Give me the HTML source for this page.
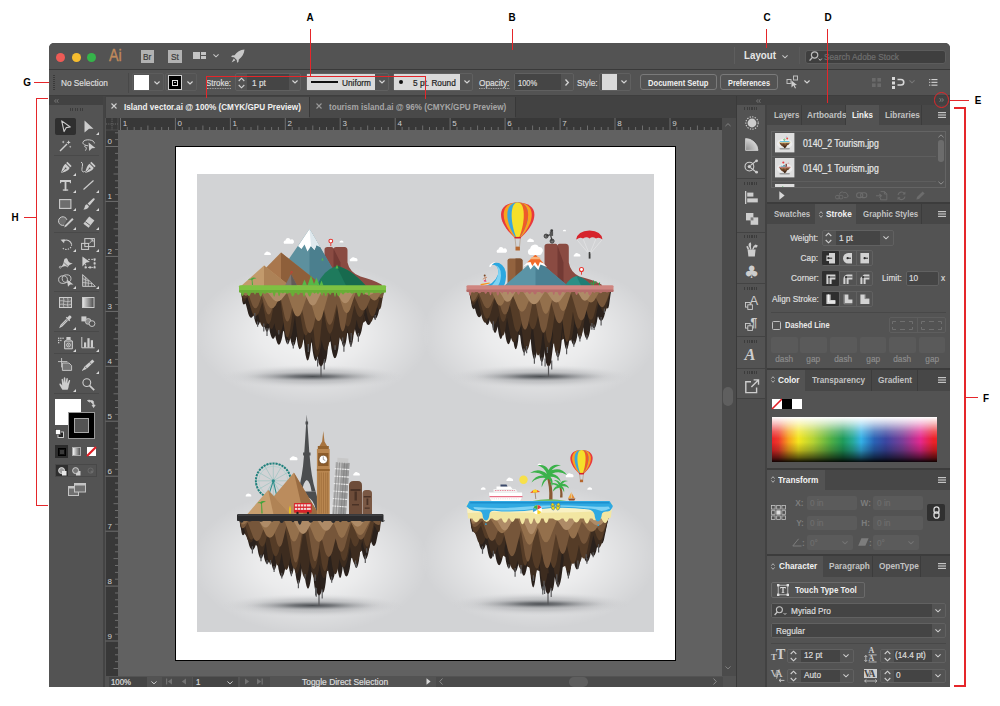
<!DOCTYPE html>
<html><head><meta charset="utf-8"><title>Illustrator workspace</title>
<style>
*{box-sizing:border-box;margin:0;padding:0}
html,body{width:1000px;height:706px;background:#fff;overflow:hidden}
body{position:relative;font-family:"Liberation Sans",sans-serif;font-size:9.5px;color:#dcdcdc;-webkit-font-smoothing:antialiased}
.a{position:absolute}
.t{position:absolute;white-space:nowrap;line-height:12px;-webkit-text-stroke:.22px;transform:scaleX(.87);transform-origin:0 50%}
.t.r{transform-origin:100% 50%}
.t.c{transform-origin:50% 50%}
.b{font-weight:bold}
.lbl{position:absolute;font-weight:bold;color:#000;font-size:11.5px;line-height:12px;transform:scaleX(.86);transform-origin:50% 50%;width:12px;text-align:center}
.b{-webkit-text-stroke:0}
.red{position:absolute;background:#e5262a}
#win{position:absolute;left:49px;top:43px;width:901px;height:643.7px;background:#535353;border-radius:5px 5px 0 0;overflow:hidden}
svg{position:absolute;overflow:visible}
.chev{position:absolute;width:6px;height:3.5px}
.fld{position:absolute;background:#454545;border:1px solid #5e5e5e;border-radius:2px}
</style></head><body>
<!-- annotation callouts -->
<div class="lbl" style="left:303.5px;top:11px">A</div>
<div class="lbl" style="left:505.5px;top:11px">B</div>
<div class="lbl" style="left:760.5px;top:11px">C</div>
<div class="lbl" style="left:821.5px;top:11px">D</div>
<div class="lbl" style="left:972px;top:94px">E</div>
<div class="lbl" style="left:980px;top:392px">F</div>
<div class="lbl" style="left:20.5px;top:76px">G</div>
<div class="lbl" style="left:8.5px;top:211px">H</div>
<div class="red" style="left:949px;top:99.5px;width:20px;height:1px"></div>
<div class="red" style="left:954px;top:107.2px;width:11.6px;height:1.4px"></div>
<div class="red" style="left:964.2px;top:107.2px;width:1.4px;height:579.6px"></div>
<div class="red" style="left:954px;top:685.4px;width:11.6px;height:1.4px"></div>
<div class="red" style="left:965px;top:397px;width:13px;height:1px"></div>
<div class="red" style="left:33.6px;top:81.5px;width:21px;height:1px"></div>
<div class="red" style="left:36px;top:97.8px;width:12px;height:1.4px"></div>
<div class="red" style="left:36px;top:97.8px;width:1.4px;height:408.4px"></div>
<div class="red" style="left:36px;top:504.8px;width:12px;height:1.4px"></div>
<div class="red" style="left:24px;top:217px;width:13px;height:1px"></div>
<div id="win"></div>
<!-- title bar -->
<div class="a" style="left:49px;top:43px;width:901px;height:26px;background:#535353;border-radius:5px 5px 0 0"></div>
<div class="a" style="left:49px;top:69px;width:901px;height:1px;background:#3a3a3a"></div>
<div class="a" style="left:56px;top:52.5px;width:9px;height:9px;border-radius:50%;background:#ee5b56"></div>
<div class="a" style="left:71.5px;top:52.5px;width:9px;height:9px;border-radius:50%;background:#f6bd2f"></div>
<div class="a" style="left:87px;top:52.5px;width:9px;height:9px;border-radius:50%;background:#35b44a"></div>
<div class="t" style="left:109px;top:45px;font-size:16.5px;line-height:20px;color:#c08a5c;letter-spacing:-.2px;-webkit-text-stroke:.35px #c08a5c">Ai</div>
<div class="a" style="left:140.5px;top:50px;width:13.5px;height:13px;background:#b2b2b2"></div>
<div class="t" style="left:142.5px;top:51.5px;font-size:9.5px;line-height:10px;color:#3a3a3a">Br</div>
<div class="a" style="left:168px;top:50px;width:13.5px;height:13px;background:#b2b2b2"></div>
<div class="t" style="left:170.5px;top:51.5px;font-size:9.5px;line-height:10px;color:#3a3a3a">St</div>
<svg style="left:193px;top:51.5px" width="13" height="7" viewBox="0 0 13 7"><rect x="0" y="0" width="7" height="7" fill="#c4c4c4"/><rect x="8" y="0" width="5" height="3" fill="#c4c4c4"/><rect x="8" y="4" width="5" height="3" fill="#c4c4c4"/></svg>
<svg class="chev" style="left:212.5px;top:54px" viewBox="0 0 7 4"><path d="M.5 .5 L3.5 3.3 L6.5 .5" fill="none" stroke="#c8c8c8" stroke-width="1.2"/></svg>
<svg style="left:231px;top:49px" width="14" height="14" viewBox="0 0 14 14"><path d="M13.5 .5 C9 .8 6 3 3.6 6.2 L1 6.6 L.2 8 L3 8.2 L5.8 11 L6 13.8 L7.4 13 L7.8 10.4 C11 8 13.2 5 13.5 .5 Z" fill="#c8c8c8"/><path d="M2.8 9.6 L.6 13.4 L4.4 11.2 Z" fill="#c8c8c8"/></svg>
<div class="a" style="left:734px;top:47px;width:1px;height:17px;background:#5e5e5e"></div>
<div class="t b" style="left:743.6px;top:49.4px;font-size:10.5px;color:#e6e6e6;transform:scaleX(.93)">Layout</div>
<svg class="chev" style="left:782px;top:54.5px" viewBox="0 0 7 4"><path d="M.5 .5 L3.5 3.3 L6.5 .5" fill="none" stroke="#c8c8c8" stroke-width="1.2"/></svg>
<div class="a" style="left:799px;top:47px;width:1px;height:17px;background:#5a5a5a"></div>
<div class="a" style="left:804.7px;top:50px;width:141.8px;height:14px;background:#3f3f3f;border:1px solid #5c5c5c;border-radius:3px"></div>
<svg style="left:809px;top:51px" width="14" height="11" viewBox="0 0 14 11"><circle cx="5.6" cy="4" r="3.2" fill="none" stroke="#bdbdbd" stroke-width="1.2"/><path d="M3.4 6.4 L.6 9.6" stroke="#bdbdbd" stroke-width="1.4"/><path d="M9.6 7.6 L11.2 9.4 L12.8 7.6" fill="none" stroke="#bdbdbd" stroke-width="1"/></svg>
<div class="t" style="left:824px;top:51px;font-size:9.5px;color:#6f6f6f">Search Adobe Stock</div>

<!-- control bar -->
<div class="a" style="left:49px;top:70px;width:901px;height:25px;background:#535353"></div>
<div class="a" style="left:52.5px;top:75px;width:2px;height:15px;background:repeating-linear-gradient(#3a3a3a 0 1px,transparent 1px 2px)"></div>
<div class="t" style="left:60.5px;top:76.7px;font-size:9.5px">No Selection</div>
<div class="a" style="left:128px;top:73px;width:1px;height:20px;background:#484848"></div>
<div class="a" style="left:131.5px;top:73px;width:32px;height:18px;border:1px solid #5c5c5c;border-radius:2px"></div><div class="a" style="left:134px;top:75.3px;width:15px;height:14.4px;background:#fff"></div>
<svg class="chev" style="left:153.5px;top:80.5px" viewBox="0 0 7 4"><path d="M.5 .5 L3.5 3.3 L6.5 .5" fill="none" stroke="#d4d4d4" stroke-width="1.35"/></svg>
<div class="a" style="left:165px;top:73px;width:32px;height:18px;border:1px solid #5c5c5c;border-radius:2px"></div><div class="a" style="left:167.5px;top:75.3px;width:14.8px;height:14.4px;background:#000;border:1px solid #cfcfcf"></div>
<div class="a" style="left:172px;top:79.5px;width:6px;height:6px;background:#000;border:1.3px solid #e6e6e6"></div><div class="a" style="left:174.3px;top:81.8px;width:1.4px;height:1.4px;background:#bbb"></div>
<svg class="chev" style="left:187px;top:80.5px" viewBox="0 0 7 4"><path d="M.5 .5 L3.5 3.3 L6.5 .5" fill="none" stroke="#d4d4d4" stroke-width="1.35"/></svg>
<div class="t" style="left:206.3px;top:76.7px;border-bottom:1px dotted #bbb;line-height:11px;height:12px;transform:scaleX(.83)">Stroke:</div>
<div class="a" style="left:235px;top:73px;width:66px;height:18px;border:1px solid #606060;border-radius:2px"></div>
<svg style="left:238px;top:76.7px" width="7" height="12" viewBox="0 0 7 12"><path d="M.7 4 L3.5 1.2 L6.3 4 M.7 8 L3.5 10.8 L6.3 8" fill="none" stroke="#d0d0d0" stroke-width="1.1"/></svg>
<div class="a" style="left:247px;top:74px;width:42px;height:16px;background:#454545"></div>
<div class="t" style="left:252px;top:76.7px">1 pt</div>
<svg class="chev" style="left:291.5px;top:80px" viewBox="0 0 7 4"><path d="M.5 .5 L3.5 3.3 L6.5 .5" fill="none" stroke="#d4d4d4" stroke-width="1.35"/></svg>
<div class="a" style="left:306px;top:73px;width:83px;height:18px;border:1px solid #606060;border-radius:2px"></div>
<div class="a" style="left:307px;top:74px;width:67.5px;height:16px;background:#dadada"></div>
<div class="a" style="left:311px;top:81px;width:27px;height:2px;background:#111"></div>
<div class="t" style="left:342.2px;top:76.7px;color:#222">Uniform</div>
<svg class="chev" style="left:379px;top:80px" viewBox="0 0 7 4"><path d="M.5 .5 L3.5 3.3 L6.5 .5" fill="none" stroke="#d4d4d4" stroke-width="1.35"/></svg>
<div class="a" style="left:393px;top:73px;width:80px;height:18px;border:1px solid #606060;border-radius:2px"></div>
<div class="a" style="left:394px;top:74px;width:65.5px;height:16px;background:#dadada"></div>
<div class="a" style="left:399px;top:80px;width:4px;height:4px;border-radius:50%;background:#111"></div>
<div class="t" style="left:412.5px;top:76.7px;color:#222">5 pt. Round</div>
<svg class="chev" style="left:463.5px;top:80px" viewBox="0 0 7 4"><path d="M.5 .5 L3.5 3.3 L6.5 .5" fill="none" stroke="#d4d4d4" stroke-width="1.35"/></svg>
<div class="t" style="left:479px;top:76.7px;border-bottom:1px dotted #bbb;line-height:11px;height:12px">Opacity:</div>
<div class="a" style="left:514px;top:73px;width:60px;height:18px;border:1px solid #606060;border-radius:2px"></div>
<div class="a" style="left:515px;top:74px;width:46px;height:16px;background:#454545"></div>
<div class="t" style="left:518px;top:76.7px;transform:scaleX(.79)">100%</div>
<svg style="left:565px;top:78.5px" width="4" height="7" viewBox="0 0 4 7"><path d="M.5 .5 L3.3 3.5 L.5 6.5" fill="none" stroke="#d4d4d4" stroke-width="1.35"/></svg>
<div class="t" style="left:577px;top:76.7px">Style:</div>
<div class="a" style="left:599px;top:73px;width:32px;height:18px;border:1px solid #606060;border-radius:2px"></div><div class="a" style="left:602px;top:74px;width:14.5px;height:16px;background:#dadada"></div>
<svg class="chev" style="left:620.8px;top:80px" viewBox="0 0 7 4"><path d="M.5 .5 L3.5 3.3 L6.5 .5" fill="none" stroke="#d4d4d4" stroke-width="1.35"/></svg>
<div class="a" style="left:640px;top:74px;width:77px;height:16px;border:1px solid #7a7a7a;border-radius:3px"></div>
<div class="t b" style="left:648px;top:76.7px;font-size:9px;color:#f0f0f0;transform:scaleX(.845)">Document Setup</div>
<div class="a" style="left:720px;top:74px;width:58px;height:16px;border:1px solid #7a7a7a;border-radius:3px"></div>
<div class="t b" style="left:727.6px;top:76.7px;font-size:9px;color:#f0f0f0;transform:scaleX(.815)">Preferences</div>
<svg style="left:786px;top:75px" width="14" height="14" viewBox="0 0 14 14"><rect x="1" y="4.5" width="4" height="4" fill="none" stroke="#bdbdbd" stroke-width="1"/><rect x="7.5" y="1" width="4" height="4" fill="none" stroke="#bdbdbd" stroke-width="1"/><path d="M5.5 5.5 L5.5 12.5 L7.5 10.6 L9 13.5 L10 13 L8.6 10.2 L11 10 Z" fill="#cfcfcf"/></svg>
<svg class="chev" style="left:803.5px;top:80px" viewBox="0 0 7 4"><path d="M.5 .5 L3.5 3.3 L6.5 .5" fill="none" stroke="#d4d4d4" stroke-width="1.35"/></svg>
<svg style="left:872px;top:77.5px" width="9" height="9" viewBox="0 0 10 10" fill="#6a6a6a"><rect x="0" y="0" width="4" height="4"/><rect x="6" y="0" width="4" height="4"/><rect x="0" y="6" width="4" height="4"/><rect x="6" y="6" width="4" height="4"/></svg>
<svg style="left:892px;top:76.7px" width="12" height="12" viewBox="0 0 12 12"><rect x="0" y="0" width="3" height="3" fill="#d8d8d8"/><rect x="0" y="4.5" width="3" height="3" fill="#d8d8d8"/><rect x="0" y="9" width="3" height="3" fill="#d8d8d8"/><path d="M5.5 2.5 H9 A2.3 2.3 0 0 1 9 8 H5.5" fill="none" stroke="#d8d8d8" stroke-width="1.6"/></svg>
<svg class="chev" style="left:909px;top:80px" viewBox="0 0 7 4"><path d="M.5 .5 L3.5 3.3 L6.5 .5" fill="none" stroke="#777" stroke-width="1.2"/></svg>
<svg style="left:928.5px;top:79px" width="8.6" height="6.8" viewBox="0 0 11 9" fill="#d0d0d0"><rect x="0" y="0" width="1.5" height="1.5"/><rect x="3" y="0" width="8" height="1.5"/><rect x="0" y="3.7" width="1.5" height="1.5"/><rect x="3" y="3.7" width="8" height="1.5"/><rect x="0" y="7.4" width="1.5" height="1.5"/><rect x="3" y="7.4" width="8" height="1.5"/></svg>
<div class="a" style="left:49px;top:95px;width:901px;height:1px;background:#3e3e3e"></div>
<!-- left toolbar -->
<div class="a" style="left:49px;top:96px;width:55px;height:591px;background:#535353"></div>
<div class="a" style="left:49px;top:96px;width:55px;height:9px;background:#424242"></div>
<div class="a" style="left:103px;top:96px;width:2px;height:591px;background:#444"></div>
<svg style="left:53.5px;top:98.6px" width="5" height="4" viewBox="0 0 6 5"><path d="M2.5 .3 L.6 2.5 L2.5 4.7 M5.3 .3 L3.4 2.5 L5.3 4.7" fill="none" stroke="#868686" stroke-width="1"/></svg>
<div class="a" style="left:69.5px;top:107.5px;width:14px;height:3px;background:repeating-linear-gradient(90deg,#3c3c3c 0 1px,transparent 1px 2.5px)"></div>
<div class="a" style="left:55px;top:118px;width:21px;height:17px;background:#2f2f2f;border-radius:2px"></div>
<div class="a" style="left:54px;top:155px;width:45px;height:1px;background:#494949"></div>
<div class="a" style="left:54px;top:232px;width:45px;height:1px;background:#494949"></div>
<div class="a" style="left:54px;top:291px;width:45px;height:1px;background:#494949"></div>
<div class="a" style="left:54px;top:331px;width:45px;height:1px;background:#494949"></div>
<div class="a" style="left:54px;top:353px;width:45px;height:1px;background:#494949"></div>
<div class="a" style="left:54px;top:393px;width:45px;height:1px;background:#494949"></div>
<!-- TOOLICONS -->
<svg style="left:61px;top:120px" width="10" height="13" viewBox="0 0 10 13"><path d="M.7 .9 L9.3 7 L5.3 7.6 L3.1 11.6 Z" fill="none" stroke="#cdcdcd" stroke-width="1.1" stroke-linejoin="round"/></svg>
<svg style="left:84px;top:120px" width="10" height="13" viewBox="0 0 10 13"><path d="M.5 .5 L9.5 8.8 L5 8.8 L.5 12.5 Z" fill="#cdcdcd"/></svg>
<svg style="left:95.5px;top:132px" width="3" height="3" viewBox="0 0 3 3"><path d="M3 0 V3 H0 Z" fill="#d8d8d8"/></svg>
<svg style="left:59px;top:139px" width="13" height="13" viewBox="0 0 13 13"><path d="M1 12 L8 5" stroke="#cdcdcd" stroke-width="1.5"/><path d="M9.6 1.2 l.6 1.6 l1.6 .6 l-1.6 .6 l-.6 1.6 l-.6 -1.6 l-1.6 -.6 l1.6 -.6 Z M4.2 1.6 l.4 1 l1 .4 l-1 .4 l-.4 1 l-.4 -1 l-1 -.4 l1 -.4 Z M11.2 6.6 l.35 .85 l.85 .35 l-.85 .35 l-.35 .85 l-.35 -.85 l-.85 -.35 l.85 -.35 Z" fill="#cdcdcd"/></svg>
<svg style="left:81.5px;top:139px" width="14" height="13" viewBox="0 0 14 13"><path d="M6.2 6.8 C2.6 6.4 .6 5 .9 3.4 C1.3 1.4 4.4 .5 7.6 .9 C10.8 1.3 12.6 2.8 12.3 4.4 M3.6 6.3 C2.4 6.6 2.4 8.2 3.6 8.2 C4.8 8.2 4.6 9.6 3.4 11.6" fill="none" stroke="#cdcdcd" stroke-width="1"/><path d="M6.6 3.6 L13.4 9 L10 9.2 L7.2 12 Z" fill="#cdcdcd"/></svg>
<svg style="left:59.5px;top:160.5px" width="12.5" height="13" viewBox="0 0 12.5 13"><path d="M7.4 .8 L11.6 5 L10.4 6.2 L6.2 2 Z" fill="#cdcdcd"/><path d="M5.6 2.8 L9.6 6.8 C9 9.4 6 10.6 1 12 C2.4 7 3.4 4 5.6 2.8 Z M1.4 11.6 L5.2 7.8" fill="#cdcdcd"/><circle cx="5.6" cy="7.4" r=".9" fill="#535353"/><path d="M1.6 11.4 L5.2 7.8" stroke="#535353" stroke-width=".6"/></svg>
<svg style="left:72.5px;top:172.5px" width="3" height="3" viewBox="0 0 3 3"><path d="M3 0 V3 H0 Z" fill="#d8d8d8"/></svg>
<svg style="left:83.5px;top:160.5px" width="12.5" height="13" viewBox="0 0 12.5 13"><path d="M7.4 .8 L11.6 5 L10.4 6.2 L6.2 2 Z" fill="#cdcdcd"/><path d="M5.6 2.8 L9.6 6.8 C9 9.4 6 10.6 1 12 C2.4 7 3.4 4 5.6 2.8 Z M1.4 11.6 L5.2 7.8" fill="#cdcdcd"/><circle cx="5.6" cy="7.4" r=".9" fill="#535353"/><path d="M1.6 11.4 L5.2 7.8" stroke="#535353" stroke-width=".6"/></svg>
<svg style="left:80px;top:161px" width="6" height="12" viewBox="0 0 6 12"><path d="M1 1.2 C4.6 2 .4 8.6 2.6 10.6 C3.4 11.2 4.4 10.8 5 10" fill="none" stroke="#cdcdcd" stroke-width="1"/></svg>
<svg style="left:60px;top:180px" width="11" height="11" viewBox="0 0 11 11"><rect x="0" y="0" width="11" height="2" fill="#cdcdcd"/><rect x="0" y="0" width="1.2" height="3.2" fill="#cdcdcd"/><rect x="9.8" y="0" width="1.2" height="3.2" fill="#cdcdcd"/><rect x="4.6" y="0" width="1.8" height="10.6" fill="#cdcdcd"/><rect x="2.8" y="9.4" width="5.4" height="1.3" fill="#cdcdcd"/></svg>
<svg style="left:72.5px;top:190px" width="3" height="3" viewBox="0 0 3 3"><path d="M3 0 V3 H0 Z" fill="#d8d8d8"/></svg>
<svg style="left:83px;top:180px" width="11" height="10" viewBox="0 0 11 10"><path d="M.5 9.5 L10.5 .5" stroke="#cdcdcd" stroke-width="1.2"/></svg>
<svg style="left:95.5px;top:190px" width="3" height="3" viewBox="0 0 3 3"><path d="M3 0 V3 H0 Z" fill="#d8d8d8"/></svg>
<svg style="left:59px;top:198.5px" width="12.5" height="10" viewBox="0 0 12.5 10"><rect x=".6" y=".6" width="11.3" height="8.8" fill="#6e6e6e" stroke="#cdcdcd" stroke-width="1.1"/></svg>
<svg style="left:72.5px;top:208px" width="3" height="3" viewBox="0 0 3 3"><path d="M3 0 V3 H0 Z" fill="#d8d8d8"/></svg>
<svg style="left:82.5px;top:197.5px" width="12" height="12" viewBox="0 0 12 12"><path d="M11.4 .4 C11.9 .9 11.8 1.5 11.3 2.1 L6.6 7.6 L4.6 5.6 L10 .6 C10.5 .1 11 0 11.4 .4 Z" fill="#cdcdcd"/><path d="M4 6.3 L5.9 8.2 C5.7 10.4 3.4 11.6 .4 11.4 C1.8 10.4 1.4 9.2 2 8 C2.4 7 3.2 6.4 4 6.3 Z" fill="#cdcdcd"/></svg>
<svg style="left:95.5px;top:208px" width="3" height="3" viewBox="0 0 3 3"><path d="M3 0 V3 H0 Z" fill="#d8d8d8"/></svg>
<svg style="left:57.5px;top:215.5px" width="16" height="13" viewBox="0 0 16 13"><path d="M8.9 3.8 A4.3 4.3 0 1 0 6 9.2" fill="#6e6e6e" stroke="#cdcdcd" stroke-width="1"/><path d="M14.2 2 L15.6 3.4 L8.4 10.6 L6.2 11.6 L7 9.2 Z" fill="#cdcdcd"/></svg>
<svg style="left:72.5px;top:227px" width="3" height="3" viewBox="0 0 3 3"><path d="M3 0 V3 H0 Z" fill="#d8d8d8"/></svg>
<svg style="left:82px;top:215.5px" width="13" height="12.5" viewBox="0 0 13 12.5"><path d="M7.2 .6 L12.4 4.6 L6.6 11.8 L1.4 7.8 Z" fill="#cdcdcd"/><path d="M3.2 5.6 L8.4 9.6" stroke="#535353" stroke-width=".9"/></svg>
<svg style="left:95.5px;top:227px" width="3" height="3" viewBox="0 0 3 3"><path d="M3 0 V3 H0 Z" fill="#d8d8d8"/></svg>
<svg style="left:59.5px;top:238px" width="13" height="12" viewBox="0 0 13 12"><path d="M3.4 3 A5.2 5.2 0 0 1 11.6 6.4" fill="none" stroke="#cdcdcd" stroke-width="1.1"/><path d="M11.6 6.4 A5.2 5.2 0 0 1 2.2 9.4" fill="none" stroke="#cdcdcd" stroke-width="1.1" stroke-dasharray="1.4 1.2"/><path d="M.6 1.8 L4.8 1.2 L4 5.2 Z" fill="#cdcdcd"/></svg>
<svg style="left:72.5px;top:249px" width="3" height="3" viewBox="0 0 3 3"><path d="M3 0 V3 H0 Z" fill="#d8d8d8"/></svg>
<svg style="left:81px;top:238px" width="14" height="12" viewBox="0 0 14 12"><rect x=".6" y="5.4" width="7" height="6" fill="none" stroke="#cdcdcd" stroke-width="1"/><rect x="3.8" y=".6" width="9.6" height="8" fill="none" stroke="#cdcdcd" stroke-width="1"/><path d="M8.4 5.2 L12 1.8 M9.6 1.8 H12 V4.2" fill="none" stroke="#cdcdcd" stroke-width=".9"/></svg>
<svg style="left:95.5px;top:249px" width="3" height="3" viewBox="0 0 3 3"><path d="M3 0 V3 H0 Z" fill="#d8d8d8"/></svg>
<svg style="left:58.5px;top:256.5px" width="15" height="11.5" viewBox="0 0 15 11.5"><path d="M1.2 10.2 C4 9 4.6 6 5 3.6 C5.4 1 8 .4 8.6 2.6 C9.2 5 10.6 6.2 13.8 6.6 C11 7.4 9.4 8.6 8.6 10.6 C7 8 4.6 9.6 1.2 10.2 Z" fill="#cdcdcd"/><circle cx="1.3" cy="10.2" r="1" fill="none" stroke="#cdcdcd" stroke-width=".7"/><path d="M5.2 5.8 L9 9.4 M4.2 4 L3 2.8 M10.2 10.4 L11.4 11.4" stroke="#535353" stroke-width=".7"/></svg>
<svg style="left:72.5px;top:267px" width="3" height="3" viewBox="0 0 3 3"><path d="M3 0 V3 H0 Z" fill="#d8d8d8"/></svg>
<svg style="left:81.5px;top:255.5px" width="14" height="12.5" viewBox="0 0 14 12.5"><path d="M.4 .6 L8 6 L4.4 6.4 L.4 10.4 Z" fill="#cdcdcd"/><path d="M6 3.4 H12.6 V11.4 H3.6 V8" fill="none" stroke="#cdcdcd" stroke-width=".9" stroke-dasharray="2 1.2"/><g fill="#cdcdcd"><rect x="11.6" y="2.4" width="2" height="2"/><rect x="11.6" y="10.4" width="2" height="2"/><rect x="2.6" y="10.4" width="2" height="2"/><rect x="7.2" y="10.4" width="2" height="2"/><rect x="11.6" y="6.4" width="2" height="2"/></g></svg>
<svg style="left:58px;top:273.5px" width="16" height="13" viewBox="0 0 16 13"><ellipse cx="5" cy="5.6" rx="4.4" ry="3.8" fill="none" stroke="#cdcdcd" stroke-width=".9"/><ellipse cx="8.6" cy="4.6" rx="4.4" ry="3.8" fill="none" stroke="#cdcdcd" stroke-width=".9"/><path d="M9 5.4 L15.4 10.4 L12.2 10.6 L10 12.8 Z" fill="#cdcdcd"/></svg>
<svg style="left:72.5px;top:285.5px" width="3" height="3" viewBox="0 0 3 3"><path d="M3 0 V3 H0 Z" fill="#d8d8d8"/></svg>
<svg style="left:81.5px;top:273.5px" width="14" height="13" viewBox="0 0 14 13"><path d="M.6 .6 V12.4 H13.4 Z" fill="none" stroke="#cdcdcd" stroke-width=".9"/><path d="M.6 4.6 L6.4 7 M.6 8.4 L10 9.6 M3.6 3.2 V12.4 M6.6 6 V12.4 M9.6 8.8 V12.4" stroke="#cdcdcd" stroke-width=".7"/><path d="M.6 .6 L6.4 5.8 V12.4 H.6 Z" fill="#cdcdcd" opacity=".25"/></svg>
<svg style="left:95.5px;top:285.5px" width="3" height="3" viewBox="0 0 3 3"><path d="M3 0 V3 H0 Z" fill="#d8d8d8"/></svg>
<svg style="left:59px;top:297px" width="13" height="11" viewBox="0 0 13 11"><rect x=".5" y=".5" width="12" height="10" fill="#6e6e6e" stroke="#cdcdcd" stroke-width="1"/><path d="M.5 4 C4 2.6 8 6.4 12.5 3.6 M.5 7.6 C4 6 8 9.4 12.5 7 M4.4 .5 C6 4 3 7 5 10.5 M8.6 .5 C10 4 7.4 7 9.2 10.5" fill="none" stroke="#cdcdcd" stroke-width=".7"/></svg>
<svg style="left:82px;top:297px" width="12.5" height="11" viewBox="0 0 12.5 11"><defs><linearGradient id="tg"><stop offset="0" stop-color="#e8e8e8"/><stop offset="1" stop-color="#4a4a4a"/></linearGradient></defs><rect x=".5" y=".5" width="11.5" height="10" fill="url(#tg)" stroke="#cdcdcd" stroke-width="1"/></svg>
<svg style="left:59px;top:314.5px" width="13" height="13" viewBox="0 0 13 13"><path d="M10.2 .6 C11.6 .2 12.8 1.4 12.4 2.8 L10.6 4.6 L11.2 5.2 L10.2 6.2 L6.8 2.8 L7.8 1.8 L8.4 2.4 Z" fill="#cdcdcd"/><path d="M7.6 4.4 L2 10 L1.2 12 L3 11 L8.6 5.4" fill="none" stroke="#cdcdcd" stroke-width="1.1"/></svg>
<svg style="left:72.5px;top:326.5px" width="3" height="3" viewBox="0 0 3 3"><path d="M3 0 V3 H0 Z" fill="#d8d8d8"/></svg>
<svg style="left:81px;top:316px" width="14.5" height="11" viewBox="0 0 14.5 11"><rect x=".4" y=".4" width="5" height="5" fill="#cdcdcd"/><circle cx="7.2" cy="5.4" r="2.9" fill="#8a8a8a" stroke="#cdcdcd" stroke-width=".8"/><circle cx="11" cy="7.6" r="2.9" fill="#535353" stroke="#cdcdcd" stroke-width=".9"/></svg>
<svg style="left:58px;top:337px" width="16" height="12.5" viewBox="0 0 16 12.5"><g fill="#cdcdcd"><rect x="0" y=".6" width="1.3" height="1.3"/><rect x="2.2" y=".6" width="1.3" height="1.3"/><rect x="4.4" y=".6" width="1.3" height="1.3"/><rect x="0" y="2.8" width="1.3" height="1.3"/><rect x="2.2" y="2.8" width="1.3" height="1.3"/><rect x="0" y="5" width="1.3" height="1.3"/><rect x="8.4" y="0" width="4.2" height="2.6"/></g><path d="M6.6 4 H14.4 V11.8 H6.6 Z" fill="#6e6e6e" stroke="#cdcdcd" stroke-width="1"/><path d="M7.6 4 L8.6 2.6 H12.4 L13.4 4" fill="none" stroke="#cdcdcd" stroke-width=".9"/><circle cx="10.5" cy="8" r="1.9" fill="none" stroke="#cdcdcd" stroke-width=".9"/><circle cx="10.5" cy="8" r=".7" fill="#cdcdcd"/></svg>
<svg style="left:72.5px;top:348.5px" width="3" height="3" viewBox="0 0 3 3"><path d="M3 0 V3 H0 Z" fill="#d8d8d8"/></svg>
<svg style="left:81px;top:337px" width="14" height="11.5" viewBox="0 0 14 11.5"><path d="M.8 0 V10.8 H13.6" fill="none" stroke="#cdcdcd" stroke-width="1"/><rect x="3" y="5.4" width="2.2" height="5.2" fill="#cdcdcd"/><rect x="6.4" y="1.2" width="2.2" height="9.4" fill="#cdcdcd"/><rect x="9.8" y="3.2" width="2.2" height="7.4" fill="#cdcdcd"/></svg>
<svg style="left:95.5px;top:348.5px" width="3" height="3" viewBox="0 0 3 3"><path d="M3 0 V3 H0 Z" fill="#d8d8d8"/></svg>
<svg style="left:57.5px;top:358px" width="14.5" height="13" viewBox="0 0 14.5 13"><path d="M0 3.6 H9.4 M3.6 0 V9.4" stroke="#cdcdcd" stroke-width=".9"/><path d="M4.4 5 H11 L13.6 7.6 V12.4 H4.4 Z" fill="#757575" stroke="#cdcdcd" stroke-width=".9"/></svg>
<svg style="left:81px;top:359px" width="14" height="12.5" viewBox="0 0 14 12.5"><path d="M11.4 .4 L13.4 2.4 L5.4 10 L.6 12 L3.6 7.4 Z" fill="#cdcdcd"/><path d="M4 7.8 L6 9.6" stroke="#535353" stroke-width=".7"/><path d="M8.4 3.2 L10.6 5.2" stroke="#535353" stroke-width=".7"/></svg>
<svg style="left:95.5px;top:371px" width="3" height="3" viewBox="0 0 3 3"><path d="M3 0 V3 H0 Z" fill="#d8d8d8"/></svg>
<svg style="left:58.5px;top:377px" width="13.5" height="13" viewBox="0 0 13.5 13"><path d="M3.4 12.8 C2.4 10.8 1 9.2 .4 7.4 C.2 6.6 1.2 6.2 1.8 6.8 L3.2 8.4 L2.6 2.4 C2.6 1.4 3.8 1.4 4 2.4 L4.6 6 L4.8 1 C4.8 0 6.2 0 6.3 1 L6.5 6 L7.4 1.6 C7.6 .6 8.9 .8 8.8 1.8 L8.4 6.4 L9.8 3.4 C10.2 2.6 11.4 3 11.1 4 L9.8 8.4 C9.6 10 9.4 11.4 8.6 12.8 Z" fill="#cdcdcd"/></svg>
<svg style="left:72.5px;top:389px" width="3" height="3" viewBox="0 0 3 3"><path d="M3 0 V3 H0 Z" fill="#d8d8d8"/></svg>
<svg style="left:81.5px;top:377.5px" width="13" height="13" viewBox="0 0 13 13"><circle cx="4.8" cy="4.6" r="3.9" fill="none" stroke="#cdcdcd" stroke-width="1.1"/><path d="M7.6 7.6 L12.2 12.2" stroke="#cdcdcd" stroke-width="1.7"/></svg>
<!-- fill / stroke -->
<div class="a" style="left:55px;top:398.5px;width:26px;height:26.5px;background:#fff"></div>
<div class="a" style="left:68px;top:412px;width:26.5px;height:26.5px;background:#000;border:1px solid #9a9a9a"></div>
<div class="a" style="left:74px;top:418px;width:14.5px;height:14.5px;background:#535353;border:1px solid #a8a8a8"></div>
<svg style="left:87px;top:399px" width="10" height="10" viewBox="0 0 10 10"><path d="M2.5 1 L2.5 3.2 L.4 1.6 Z M2 1.6 H5 Q6.6 1.6 6.6 3.4 V6 M5 6 L8.2 6 L6.6 8.6 Z" fill="#cfcfcf" stroke="#cfcfcf" stroke-width=".7"/></svg>
<svg style="left:55px;top:429px" width="9" height="9" viewBox="0 0 9 9"><rect x="3" y="3" width="5.5" height="5.5" fill="#222" stroke="#ddd" stroke-width=".9"/><rect x=".5" y=".5" width="5" height="5" fill="#fff" stroke="#333" stroke-width=".6"/></svg>
<div class="a" style="left:55px;top:445px;width:13px;height:13px;background:#2c2c2c"></div>
<div class="a" style="left:57.5px;top:447.5px;width:8px;height:8px;background:#111;border:1.5px solid #000"></div>
<div class="a" style="left:59.5px;top:449.5px;width:4px;height:4px;background:#3a3a3a"></div>
<div class="a" style="left:72px;top:447px;width:9px;height:9px;background:linear-gradient(90deg,#f4f4f4,#555);border:1px solid #aaa"></div>
<svg style="left:86.5px;top:447px" width="9" height="9" viewBox="0 0 9 9"><rect x="0" y="0" width="9" height="9" fill="#fff"/><path d="M0 9 L9 0" stroke="#e21d24" stroke-width="2.2"/></svg>
<div class="a" style="left:55px;top:464px;width:13px;height:13px;background:#2f2f2f"></div>
<div class="a" style="left:55px;top:464px;width:42px;height:13px;border:1px solid #484848"></div>
<svg style="left:57.5px;top:466.5px" width="9" height="9" viewBox="0 0 9 9"><circle cx="3.6" cy="3.6" r="3" fill="#999" stroke="#e8e8e8" stroke-width=".9"/><rect x="4" y="4" width="4.5" height="4.5" fill="#e8e8e8"/></svg>
<svg style="left:72px;top:466.5px" width="9" height="9" viewBox="0 0 9 9"><rect x="4" y="4" width="4.5" height="4.5" fill="#cfcfcf"/><circle cx="3.6" cy="3.6" r="3" fill="#777" stroke="#d8d8d8" stroke-width=".9"/></svg>
<svg style="left:87px;top:467px" width="8" height="8" viewBox="0 0 8 8"><circle cx="3.6" cy="3.6" r="2.6" fill="none" stroke="#6c6c6c" stroke-width=".9"/><rect x="3.6" y="3.6" width="2.5" height="2.5" fill="#6c6c6c"/></svg>
<svg style="left:68px;top:483px" width="18" height="13" viewBox="0 0 18 13"><rect x=".5" y="3.5" width="10" height="9" fill="#707070" stroke="#c4c4c4"/><rect x=".5" y="3.5" width="10" height="2" fill="#c4c4c4"/><rect x="6.5" y=".5" width="11" height="8.5" fill="#707070" stroke="#c4c4c4"/><rect x="6.5" y=".5" width="11" height="2" fill="#c4c4c4"/></svg>
<!-- document area -->
<div class="a" style="left:105px;top:96px;width:631px;height:22px;background:#424242"></div>
<div class="a" style="left:105.5px;top:96.5px;width:203px;height:21px;background:#535353"></div>
<div class="a" style="left:309px;top:96.5px;width:206px;height:21px;background:#494949"></div><div class="a" style="left:308.5px;top:97px;width:1px;height:20px;background:#383838"></div><div class="a" style="left:515px;top:97px;width:1px;height:20px;background:#383838"></div>
<svg style="left:111px;top:102.5px" width="6" height="6" viewBox="0 0 6 6"><path d="M.5 .5 L5.5 5.5 M5.5 .5 L.5 5.5" stroke="#d0d0d0" stroke-width="1.1"/></svg>
<div class="t b" style="left:124px;top:101px;font-size:9.5px;color:#f0f0f0;transform:scaleX(.858)">Island vector.ai @ 100% (CMYK/GPU Preview)</div>
<svg style="left:316px;top:102.5px" width="6" height="6" viewBox="0 0 6 6"><path d="M.5 .5 L5.5 5.5 M5.5 .5 L.5 5.5" stroke="#9a9a9a" stroke-width="1.1"/></svg>
<div class="t b" style="left:328.5px;top:101px;font-size:9.5px;color:#a6a6a6;transform:scaleX(.853)">tourism island.ai @ 96% (CMYK/GPU Preview)</div>
<!-- rulers -->
<div class="a" style="left:105.5px;top:118px;width:630px;height:12px;background:#383838"></div>
<div class="a" style="left:105.5px;top:118px;width:12.5px;height:569px;background:#383838"></div>
<div class="a" style="left:118px;top:130px;width:604px;height:546px;background:#616161"></div>
<!-- RULERS -->
<svg style="left:0;top:0" width="1000" height="706" viewBox="0 0 1000 706" font-family="Liberation Sans, sans-serif" font-size="8" fill="#cfcfcf">
<path d="M120.5 118 V130 M127.3 127 V130 M134.2 127 V130 M141.1 127 V130 M147.9 125.5 V130 M154.8 127 V130 M161.7 127 V130 M168.5 127 V130 M175.4 118 V130 M182.3 127 V130 M189.1 127 V130 M196.0 127 V130 M202.9 125.5 V130 M209.7 127 V130 M216.6 127 V130 M223.5 127 V130 M230.4 118 V130 M237.2 127 V130 M244.1 127 V130 M251.0 127 V130 M257.8 125.5 V130 M264.7 127 V130 M271.6 127 V130 M278.4 127 V130 M285.3 118 V130 M292.2 127 V130 M299.0 127 V130 M305.9 127 V130 M312.8 125.5 V130 M319.6 127 V130 M326.5 127 V130 M333.4 127 V130 M340.2 118 V130 M347.1 127 V130 M354.0 127 V130 M360.9 127 V130 M367.7 125.5 V130 M374.6 127 V130 M381.5 127 V130 M388.3 127 V130 M395.2 118 V130 M402.1 127 V130 M408.9 127 V130 M415.8 127 V130 M422.7 125.5 V130 M429.5 127 V130 M436.4 127 V130 M443.3 127 V130 M450.1 118 V130 M457.0 127 V130 M463.9 127 V130 M470.8 127 V130 M477.6 125.5 V130 M484.5 127 V130 M491.4 127 V130 M498.2 127 V130 M505.1 118 V130 M512.0 127 V130 M518.8 127 V130 M525.7 127 V130 M532.6 125.5 V130 M539.4 127 V130 M546.3 127 V130 M553.2 127 V130 M560.1 118 V130 M566.9 127 V130 M573.8 127 V130 M580.7 127 V130 M587.5 125.5 V130 M594.4 127 V130 M601.3 127 V130 M608.1 127 V130 M615.0 118 V130 M621.9 127 V130 M628.7 127 V130 M635.6 127 V130 M642.5 125.5 V130 M649.3 127 V130 M656.2 127 V130 M663.1 127 V130 M670.0 118 V130 M676.8 127 V130 M683.7 127 V130 M690.6 127 V130 M697.4 125.5 V130 M704.3 127 V130 M711.2 127 V130 M718.0 127 V130 " stroke="#7c7c7c" stroke-width=".8" fill="none"/>
<text x="122.7" y="125.6">1</text>
<text x="177.6" y="125.6">0</text>
<text x="232.6" y="125.6">1</text>
<text x="287.5" y="125.6">2</text>
<text x="342.4" y="125.6">3</text>
<text x="397.4" y="125.6">4</text>
<text x="452.3" y="125.6">5</text>
<text x="507.3" y="125.6">6</text>
<text x="562.3" y="125.6">7</text>
<text x="617.2" y="125.6">8</text>
<text x="672.2" y="125.6">9</text>
<path d="M115 132.8 H118 M115 139.6 H118 M105.5 146.5 H118 M115 153.4 H118 M115 160.2 H118 M115 167.1 H118 M113.5 174.0 H118 M115 180.8 H118 M115 187.7 H118 M115 194.6 H118 M105.5 201.4 H118 M115 208.3 H118 M115 215.2 H118 M115 222.1 H118 M113.5 228.9 H118 M115 235.8 H118 M115 242.7 H118 M115 249.5 H118 M105.5 256.4 H118 M115 263.3 H118 M115 270.1 H118 M115 277.0 H118 M113.5 283.9 H118 M115 290.7 H118 M115 297.6 H118 M115 304.5 H118 M105.5 311.4 H118 M115 318.2 H118 M115 325.1 H118 M115 332.0 H118 M113.5 338.8 H118 M115 345.7 H118 M115 352.6 H118 M115 359.4 H118 M105.5 366.3 H118 M115 373.2 H118 M115 380.0 H118 M115 386.9 H118 M113.5 393.8 H118 M115 400.6 H118 M115 407.5 H118 M115 414.4 H118 M105.5 421.2 H118 M115 428.1 H118 M115 435.0 H118 M115 441.9 H118 M113.5 448.7 H118 M115 455.6 H118 M115 462.5 H118 M115 469.3 H118 M105.5 476.2 H118 M115 483.1 H118 M115 489.9 H118 M115 496.8 H118 M113.5 503.7 H118 M115 510.5 H118 M115 517.4 H118 M115 524.3 H118 M105.5 531.2 H118 M115 538.0 H118 M115 544.9 H118 M115 551.8 H118 M113.5 558.6 H118 M115 565.5 H118 M115 572.4 H118 M115 579.2 H118 M105.5 586.1 H118 M115 593.0 H118 M115 599.8 H118 M115 606.7 H118 M113.5 613.6 H118 M115 620.4 H118 M115 627.3 H118 M115 634.2 H118 M105.5 641.0 H118 M115 647.9 H118 M115 654.8 H118 M115 661.7 H118 M113.5 668.5 H118 " stroke="#7c7c7c" stroke-width=".8" fill="none"/>
<text x="107.6" y="144.3">0</text>
<text x="107.6" y="199.2">1</text>
<text x="107.6" y="254.2">2</text>
<text x="107.6" y="309.2">3</text>
<text x="107.6" y="364.1">4</text>
<text x="107.6" y="419.1">5</text>
<text x="107.6" y="474.0">6</text>
<text x="107.6" y="529.0">7</text>
<text x="107.6" y="583.9">8</text>
<text x="107.6" y="638.8">9</text>
<path d="M106 124 H118 M112 118.5 V130" stroke="#7c7c7c" stroke-width=".7" stroke-dasharray="1.2 1" fill="none"/>
<path d="M118 118 V130 M105.5 130 H118" stroke="#5a5a5a" stroke-width=".6" fill="none"/>
</svg>
<!-- scrollbars / status -->
<div class="a" style="left:722px;top:118px;width:13.5px;height:558px;background:#4b4b4b"></div>
<div class="a" style="left:723.3px;top:386.5px;width:10px;height:19px;background:#5f5f5f;border-radius:5px"></div>
<svg class="chev" style="left:725px;top:123px" viewBox="0 0 7 4"><path d="M.5 3.5 L3.5 .7 L6.5 3.5" fill="none" stroke="#8a8a8a" stroke-width="1"/></svg>
<svg class="chev" style="left:725px;top:666px" viewBox="0 0 7 4"><path d="M.5 .5 L3.5 3.3 L6.5 .5" fill="none" stroke="#8a8a8a" stroke-width="1"/></svg>
<div class="a" style="left:105.5px;top:675.5px;width:630px;height:11.5px;background:#535353"></div>
<div class="a" style="left:108.5px;top:676.5px;width:38.5px;height:10.5px;background:#454545"></div>
<div class="t" style="left:111px;top:677px;font-size:9px;line-height:11px">100%</div>
<svg class="chev" style="left:150.5px;top:680.5px" viewBox="0 0 7 4"><path d="M.5 .5 L3.5 3.3 L6.5 .5" fill="none" stroke="#d0d0d0" stroke-width="1.1"/></svg>
<div class="a" style="left:161.5px;top:676.5px;width:30px;height:10.5px;background:#4b4b4b"></div>
<svg style="left:166px;top:678px" width="21" height="7" viewBox="0 0 21 7" fill="#737373"><rect x="0" y=".5" width="1.2" height="6"/><path d="M6 .5 V6.5 L1.8 3.5 Z"/><path d="M20 .5 V6.5 L15.8 3.5 Z"/></svg>
<div class="a" style="left:193px;top:676.5px;width:45px;height:10.5px;background:#454545"></div>
<div class="t" style="left:195.5px;top:677px;font-size:9px;line-height:11px">1</div>
<svg class="chev" style="left:226.5px;top:680.5px" viewBox="0 0 7 4"><path d="M.5 .5 L3.5 3.3 L6.5 .5" fill="none" stroke="#d0d0d0" stroke-width="1.1"/></svg>
<div class="a" style="left:239.5px;top:676.5px;width:30px;height:10.5px;background:#4b4b4b"></div>
<svg style="left:244px;top:678px" width="21" height="7" viewBox="0 0 21 7" fill="#737373"><path d="M1 .5 V6.5 L5.2 3.5 Z"/><path d="M13 .5 V6.5 L17.2 3.5 Z"/><rect x="17.6" y=".5" width="1.2" height="6"/></svg>
<div class="t" style="left:302px;top:677px;font-size:9px;line-height:11px;transform:scaleX(.935)">Toggle Direct Selection</div>
<svg style="left:426px;top:677.5px" width="5" height="7" viewBox="0 0 5 7"><path d="M.5 .3 V6.7 L4.6 3.5 Z" fill="#d8d8d8"/></svg>
<div class="a" style="left:436px;top:676.5px;width:287px;height:10.5px;background:#4b4b4b"></div>
<svg style="left:439px;top:678px" width="4" height="7" viewBox="0 0 4 7"><path d="M3.5 .5 L.7 3.5 L3.5 6.5" fill="none" stroke="#8a8a8a" stroke-width="1"/></svg>
<svg style="left:713px;top:678px" width="4" height="7" viewBox="0 0 4 7"><path d="M.5 .5 L3.3 3.5 L.5 6.5" fill="none" stroke="#8a8a8a" stroke-width="1"/></svg>
<div class="a" style="left:568.5px;top:677px;width:19px;height:9.5px;background:#5e5e5e;border-radius:4.7px"></div>
<!-- artboard -->
<div class="a" style="left:175px;top:146px;width:500.7px;height:514.5px;background:#fff;border:1px solid #000"></div>
<div class="a" style="left:196.7px;top:174.4px;width:457.3px;height:457.6px;background:#d2d3d5"></div>
<!-- artwork -->
<svg style="left:196.5px;top:174.5px" width="458" height="458" viewBox="196.5 174.5 458 458">
<defs>
<radialGradient id="halo"><stop offset="0" stop-color="#fff" stop-opacity=".8"/><stop offset=".45" stop-color="#fff" stop-opacity=".55"/><stop offset="1" stop-color="#fff" stop-opacity="0"/></radialGradient>
<radialGradient id="shad"><stop offset="0" stop-color="#44474b" stop-opacity=".9"/><stop offset=".3" stop-color="#5e6165" stop-opacity=".72"/><stop offset=".65" stop-color="#9a9c9f" stop-opacity=".38"/><stop offset="1" stop-color="#d2d3d5" stop-opacity="0"/></radialGradient>
<radialGradient id="shad2"><stop offset="0" stop-color="#6a6d71" stop-opacity=".55"/><stop offset=".55" stop-color="#8a8c90" stop-opacity=".3"/><stop offset="1" stop-color="#d2d3d5" stop-opacity="0"/></radialGradient>
<clipPath id="artclip"><rect x="196.5" y="174.5" width="458" height="458"/></clipPath>
</defs><g clip-path="url(#artclip)">
<ellipse cx="312.0" cy="333" rx="118" ry="72" fill="url(#halo)"/>
<ellipse cx="539.5" cy="333" rx="118" ry="72" fill="url(#halo)"/>
<ellipse cx="309.75" cy="561.5" rx="118" ry="72" fill="url(#halo)"/>
<ellipse cx="538.75" cy="556" rx="118" ry="72" fill="url(#halo)"/>
<ellipse cx="312" cy="376" rx="92" ry="12" fill="url(#shad2)"/><ellipse cx="312" cy="376" rx="70" ry="5.5" fill="url(#shad)"/>
<ellipse cx="540" cy="376" rx="92" ry="12" fill="url(#shad2)"/><ellipse cx="540" cy="376" rx="70" ry="5.5" fill="url(#shad)"/>
<ellipse cx="312" cy="605" rx="92" ry="12" fill="url(#shad2)"/><ellipse cx="312" cy="605" rx="70" ry="5.5" fill="url(#shad)"/>
<ellipse cx="540" cy="603.5" rx="92" ry="12" fill="url(#shad2)"/><ellipse cx="540" cy="603.5" rx="70" ry="5.5" fill="url(#shad)"/>
<g>
<path d="M283.6 243.2 a2 2 0 0 1 1.32 -3.3000000000000003 a2.6 2.6 0 0 1 5.06 -0.66 a2 2 0 0 1 2.4200000000000004 3.9600000000000004 Z" fill="#fff"/><path d="M263.8 254.6 a2 2 0 0 1 0.96 -2.4000000000000004 a2.6 2.6 0 0 1 3.6799999999999997 -0.48 a2 2 0 0 1 1.7600000000000002 2.8800000000000003 Z" fill="#fff"/><path d="M349.4 260.8 a2 2 0 0 1 1.08 -2.7 a2.6 2.6 0 0 1 4.14 -0.54 a2 2 0 0 1 1.9800000000000002 3.24 Z" fill="#fff"/><path d="M339.0 242.0 a2 2 0 0 1 0.6 -1.5 a2.6 2.6 0 0 1 2.3 -0.3 a2 2 0 0 1 1.1 1.8 Z" fill="#fff"/>
<path d="M324 285 V249 Q324 246.5 327 246.5 H331 Q332.5 246.5 333 248 Q333.5 246.5 335.5 246.5 H344 Q347 246.5 347 250 V262 Q349 272 360 276 Q372 279 381 284 L382 286 Z" fill="#8a4b42"/>
<path d="M333 248 V285 H340 V262 Z" fill="#733a34"/>
<path d="M309 228.5 L286 262 L300 285 H342 Z" fill="#5d909e"/><path d="M309 228.5 V285 H342 Z" fill="#4b7f8e"/>
<path d="M309 228.5 L297.5 245.5 L301 248.5 L304 244 L307 251 L310.5 245.5 L314 249.5 L316 244.5 L319.5 246.5 Z" fill="#fff"/><path d="M309 228.5 L310.5 245.5 L314 249.5 L316 244.5 L319.5 246.5 Z" fill="#dfe9ee"/>
<path d="M280.5 252 L248 285 H322 Z" fill="#a9774d"/><path d="M280.5 252 V285 H322 Z" fill="#8e5f3a"/>
<path d="M263.5 265 L240 286 H290 Z" fill="#c29a6c"/><path d="M263.5 265 V286 H290 Z" fill="#ad8257"/>
<path d="M316 286 Q322 270 336 265.5 Q350 268 366 286 Z" fill="#1e7a5c"/><path d="M336 265.5 Q350 268 366 286 H346 Z" fill="#176a4e"/>
<path d="M284.5 285 L290.5 273.5 L296.5 285 Z" fill="#7d7672"/><path d="M290.5 273.5 L296.5 285 H291 Z" fill="#625b57"/><path d="M290.5 271 v3 M290.5 271 l2 .8" stroke="#d33" stroke-width=".7"/>
<path d="M307 285 l3.5 -10 l3.5 10 Z M313 285 l3 -8 l3 8 Z M301.5 285 l2.5 -6 l2.5 6 Z M319 285 l2 -5 l2 5 Z" fill="#55b948"/>
<path d="M335 268 l1.5 -4 l1.5 4 Z M321 260 l1 -3 l1 3 Z" fill="#55b948"/>
<path d="M250 278.5 q3 -2.5 6 -.5 q-3 -.5 -4 1.5 l.6 5 h-1.2 l-.2 -4.6 q-1.5 -1.6 -3.6 -.6 q1 -1.4 2.4 -.8" fill="#4caa3f"/>
<circle cx="330.3" cy="240.6" r="1.9" fill="#fff" stroke="#e5352f" stroke-width="1.1"/><path d="M330.3 242.6 v3" stroke="#e5352f" stroke-width=".9"/>
</g>
<path d="M308.5 287 L318.0 362 Q320.5 370 323.0 362 L332.5 287 Z" fill="#2a1f1a"/>
<path d="M240.0 287.0 L243.6 301.0 L247.2 306.2 L250.8 310.1 L254.4 313.4 L258.0 316.3 L261.6 318.8 L265.2 321.2 L268.8 323.3 L272.4 325.4 L276.0 327.3 L279.6 329.1 L283.2 330.8 L286.8 332.4 L290.4 334.0 L294.0 335.5 L297.6 337.0 L301.2 338.4 L304.8 339.8 L308.4 341.1 L312.0 342.4 L315.6 343.7 L319.2 344.9 L322.8 344.3 L326.4 342.8 L330.0 341.1 L333.6 339.4 L337.2 337.7 L340.8 335.8 L344.4 333.9 L348.0 331.9 L351.6 329.8 L355.2 327.5 L358.8 325.1 L362.4 322.5 L366.0 319.7 L369.6 316.5 L373.2 312.8 L376.8 308.4 L380.4 302.6 L384.0 287.0 Z" fill="#3d2c1f"/>
<path d="M240.0 287 L242.0 301.8 Q242.8 306.4 245.7 301.8 L252.5 287 Z M241.2 287 L247.8 313.2 Q250.6 321.3 253.5 313.2 L260.1 287 Z M247.6 287 L254.3 319.8 Q257.1 329.9 260.0 319.8 L266.6 287 Z M258.5 287 L264.1 325.4 Q266.5 337.2 268.9 325.4 L274.5 287 Z M262.0 287 L269.4 331.4 Q272.6 345.2 275.7 331.4 L283.1 287 Z M267.2 287 L275.0 336.6 Q278.4 352.0 281.7 336.6 L289.6 287 Z M277.2 287 L284.2 335.9 Q287.1 351.1 290.1 335.9 L297.0 287 Z M283.2 287 L289.9 337.9 Q292.8 353.6 295.7 337.9 L302.3 287 Z M290.8 287 L296.7 340.4 Q299.3 357.0 301.9 340.4 L307.8 287 Z M297.9 287 L304.4 350.2 Q307.1 369.7 309.9 350.2 L316.4 287 Z M305.3 287 L312.2 350.6 Q315.2 370.3 318.2 350.6 L325.2 287 Z M314.7 287 L321.2 353.0 Q324.0 373.4 326.8 353.0 L333.3 287 Z M323.2 287 L331.0 348.3 Q334.4 367.3 337.8 348.3 L345.6 287 Z M334.6 287 L340.7 338.5 Q343.4 354.5 346.0 338.5 L352.2 287 Z M342.5 287 L348.0 337.8 Q350.4 353.5 352.7 337.8 L358.3 287 Z M347.2 287 L354.7 330.0 Q357.9 343.3 361.1 330.0 L368.6 287 Z M357.4 287 L364.9 319.4 Q368.1 329.4 371.3 319.4 L378.8 287 Z M363.8 287 L371.4 314.0 Q374.7 322.4 377.5 314.0 L384.0 287 Z " fill="#2a211c"/>
<path d="M240.0 287 L241.8 299.4 Q242.6 303.2 245.2 299.4 L251.4 287 Z M244.7 287 L251.4 312.2 Q254.3 320.0 257.1 312.2 L263.8 287 Z M250.9 287 L259.5 321.5 Q263.3 332.2 267.0 321.5 L275.6 287 Z M261.5 287 L268.1 323.0 Q271.0 334.2 273.8 323.0 L280.4 287 Z M266.6 287 L274.8 327.2 Q278.3 339.6 281.8 327.2 L290.0 287 Z M278.4 287 L285.6 331.9 Q288.7 345.8 291.8 331.9 L299.0 287 Z M291.0 287 L297.4 339.6 Q300.1 355.9 302.8 339.6 L309.1 287 Z M297.6 287 L304.7 339.5 Q307.8 355.7 310.8 339.5 L318.0 287 Z M304.0 287 L312.7 347.0 Q316.4 365.6 320.1 347.0 L328.8 287 Z M313.2 287 L321.6 341.8 Q325.2 358.8 328.8 341.8 L337.3 287 Z M322.7 287 L331.0 340.7 Q334.6 357.3 338.2 340.7 L346.5 287 Z M329.7 287 L338.4 333.9 Q342.2 348.4 345.9 333.9 L354.6 287 Z M339.1 287 L347.3 329.9 Q350.7 343.2 354.2 329.9 L362.3 287 Z M350.7 287 L356.9 323.0 Q359.5 334.2 362.1 323.0 L368.3 287 Z M360.5 287 L367.2 316.9 Q370.0 326.1 372.8 316.9 L379.5 287 Z M368.9 287 L376.1 306.1 Q379.2 312.0 380.7 306.1 L384.0 287 Z " fill="#3d2c1f"/>
<path d="M240.0 287 L242.3 296.5 Q243.3 299.5 246.7 296.5 L254.7 287 Z M243.7 287 L251.7 311.6 Q255.2 319.2 258.6 311.6 L266.7 287 Z M259.1 287 L265.3 318.7 Q267.9 328.5 270.6 318.7 L276.7 287 Z M278.1 287 L284.2 330.2 Q286.9 343.5 289.5 330.2 L295.7 287 Z M295.0 287 L302.2 328.6 Q305.3 341.5 308.4 328.6 L315.7 287 Z M308.5 287 L314.3 341.4 Q316.8 358.2 319.2 341.4 L325.0 287 Z M318.7 287 L326.2 327.0 Q329.4 339.3 332.6 327.0 L340.2 287 Z M337.0 287 L344.2 320.8 Q347.3 331.3 350.4 320.8 L357.7 287 Z M348.6 287 L356.2 312.5 Q359.4 320.4 362.7 312.5 L370.2 287 Z M361.8 287 L368.9 311.9 Q372.0 319.7 375.0 311.9 L382.2 287 Z " fill="#553c27"/>
<path d="M240.0 287 L241.5 293.7 Q242.1 295.7 245.8 293.7 L254.3 287 Z M245.3 287 L252.0 305.0 Q254.9 310.6 257.8 305.0 L264.5 287 Z M258.9 287 L265.4 310.4 Q268.2 317.7 270.9 310.4 L277.4 287 Z M277.9 287 L284.2 316.5 Q286.9 325.7 289.6 316.5 L296.0 287 Z M296.7 287 L305.4 326.5 Q309.2 338.7 312.9 326.5 L321.6 287 Z M318.4 287 L326.0 319.2 Q329.2 329.2 332.5 319.2 L340.1 287 Z M333.6 287 L339.6 325.1 Q342.2 336.9 344.8 325.1 L350.8 287 Z M350.0 287 L358.7 306.9 Q362.4 313.1 366.1 306.9 L374.7 287 Z M371.4 287 L378.7 296.2 Q381.8 299.0 382.5 296.2 L384.0 287 Z " fill="#76563a"/>
<path d="M240.0 287 L243.5 294.2 Q245.0 296.4 247.8 294.2 L254.2 287 Z M258.6 287 L267.5 305.0 Q271.3 310.5 275.1 305.0 L284.0 287 Z M284.8 287 L293.4 312.2 Q297.1 319.9 300.8 312.2 L309.3 287 Z M306.2 287 L314.5 315.9 Q318.0 324.9 321.6 315.9 L329.8 287 Z M335.5 287 L343.0 309.3 Q346.2 316.2 349.4 309.3 L356.8 287 Z M362.8 287 L370.8 298.3 Q374.2 301.8 377.1 298.3 L384.0 287 Z " fill="#94704c"/>
<path d="M240.0 287 L242.3 289.9 Q243.3 290.8 246.9 289.9 L255.4 287 Z M263.2 287 L272.8 299.1 Q276.9 302.9 281.0 299.1 L290.6 287 Z M301.1 287 L308.9 302.7 Q312.2 307.5 315.5 302.7 L323.2 287 Z M333.4 287 L341.3 300.7 Q344.7 305.0 348.1 300.7 L356.0 287 Z M355.3 287 L364.1 293.6 Q367.9 295.6 371.7 293.6 L380.6 287 Z " fill="#ae8b67"/>
<path d="M307.8 343.4 v8.0 M263.3 323.1 v7.8 M374.7 314.6 v5.0 M257.1 321.1 v5.1 M342.2 337.0 v5.1 M357.9 332.6 v8.6 M350.4 341.4 v5.0 M334.6 344.7 v4.7 M254.3 312.5 v5.8 M350.7 332.5 v8.5 M324.0 358.6 v4.2 M287.1 339.4 v4.3 M343.4 342.3 v8.9 M266.5 327.4 v8.1 M278.3 329.4 v4.6 M292.8 341.5 v6.4 M320.5 365 V376.5 M323.7 360 v9 M317.1 358 v8" stroke="#58585a" stroke-width="1.2" fill="none"/>
<path d="M238.5 285.8 Q238.5 284.8 240 284.8 H384 Q385.5 284.8 385.5 285.8 V291 Q385.5 292 384 292 H240 Q238.5 292 238.5 291 Z" fill="#7ec142"/>
<path d="M240.0 291 q2.0 8.9 4.1 0 Z M246.0 291 q2.4 8.9 4.9 0 Z M253.2 291 q1.3 6.7 2.6 0 Z M258.1 291 q2.1 10.2 4.1 0 Z M262.5 291 q1.8 5.0 3.7 0 Z M267.6 291 q2.0 3.1 3.9 0 Z M272.1 291 q1.6 10.3 3.2 0 Z M277.2 291 q1.4 9.4 2.9 0 Z M280.4 291 q2.0 4.0 4.0 0 Z M284.5 291 q2.3 4.7 4.7 0 Z M289.7 291 q2.5 10.0 5.0 0 Z M295.4 291 q2.5 7.3 4.9 0 Z M302.0 291 q1.5 10.5 3.0 0 Z M306.7 291 q2.5 10.1 4.9 0 Z M312.4 291 q1.7 4.3 3.4 0 Z M316.1 291 q1.3 5.4 2.7 0 Z M320.3 291 q1.3 8.4 2.5 0 Z M323.6 291 q1.6 9.5 3.3 0 Z M328.1 291 q1.6 6.8 3.3 0 Z M333.2 291 q1.3 10.8 2.6 0 Z M335.9 291 q2.2 9.8 4.4 0 Z M340.3 291 q2.2 5.9 4.5 0 Z M346.2 291 q1.3 3.4 2.5 0 Z M349.2 291 q2.4 4.6 4.9 0 Z M356.0 291 q2.4 10.5 4.8 0 Z M361.6 291 q1.7 7.2 3.4 0 Z M367.0 291 q1.4 9.0 2.8 0 Z M371.7 291 q2.3 3.3 4.6 0 Z M378.8 291 q1.4 5.7 2.7 0 Z " fill="#69ad37"/><rect x="238.5" y="289.4" width="147" height="2.6" fill="#69ad37" rx="1"/>
<g>
<path d="M496.6 252.2 a2 2 0 0 1 1.32 -3.3000000000000003 a2.6 2.6 0 0 1 5.06 -0.66 a2 2 0 0 1 2.4200000000000004 3.9600000000000004 Z" fill="#fff"/><path d="M526.8 241.6 a2 2 0 0 1 0.96 -2.4000000000000004 a2.6 2.6 0 0 1 3.6799999999999997 -0.48 a2 2 0 0 1 1.7600000000000002 2.8800000000000003 Z" fill="#fff"/><path d="M573.3 256.1 a2 2 0 0 1 0.96 -2.4000000000000004 a2.6 2.6 0 0 1 3.6799999999999997 -0.48 a2 2 0 0 1 1.7600000000000002 2.8800000000000003 Z" fill="#fff"/><path d="M562.4 230.8 a2 2 0 0 1 0.48 -1.2000000000000002 a2.6 2.6 0 0 1 1.8399999999999999 -0.24 a2 2 0 0 1 0.8800000000000001 1.4400000000000002 Z" fill="#fff"/>
<g><path d="M517.2 202 C538.5 202 539.3 220.2 520.4 237 L514.0 237 C495.1 220.2 496.0 202 517.2 202 Z" fill="#e8383d"/><path d="M517.2 202 C535.1 202 535.8 220.2 520.0 237 L514.4 237 C498.6 220.2 499.4 202 517.2 202 Z" fill="#f7a41d"/><path d="M517.2 202 C530.4 202 530.9 220.2 519.4 237 L515.0 237 C503.5 220.2 504.0 202 517.2 202 Z" fill="#3aa6dd"/><path d="M517.2 202 C530.4 202 530.9 220.2 519.4 237 L517.2 237 Z" fill="#ef5a2a"/><path d="M517.2 202 C524.9 202 525.2 220.2 518.7 237 L515.7 237 C509.2 220.2 509.6 202 517.2 202 Z" fill="#f5e02a"/><rect x="514.0" y="236.4" width="6.4" height="1.6" fill="#d6242c"/><path d="M514.6 238 L515.4 246.1 M519.8 238 L519.0 246.1" stroke="#9a7a5a" stroke-width=".45"/><rect x="515.0" y="246.1" width="4.4" height="3.9" fill="#b5672f"/></g>
<g transform="translate(0 2.6)"><path d="M575.6 236.5 Q577 228 589 227.5 Q601 228 602 236.5 Q598.5 233.5 595.5 235.5 Q592 233 589 235.3 Q586 233 582.5 235.5 Q579.5 233.5 576 236.5 Z" fill="#d6242c"/>
<path d="M576.3 236.5 L588.6 251 M582.5 235.5 L588.8 251 M595.5 235.5 L589.2 251 M601.7 236.5 L589.4 251" stroke="#f4f4f4" stroke-width=".45" opacity=".9"/><path d="M588.2 250.5 h1.8 v5 h-1.8 Z" fill="#3a3a3a"/><circle cx="589" cy="249.8" r="1" fill="#3a3a3a"/></g>
<path d="M507 285 V260 Q507 258 509.5 258 H519.5 Q522 258 522 260 V285 Z" fill="#93633f"/><path d="M515 258 H519.5 Q522 258 522 260 V285 H515 Z" fill="#7c5032"/>
<path d="M544 285 V246 Q544 243.3 547 243.3 H555 Q556.7 243.3 557 245 Q557.3 243.3 559 243.3 H565 Q568.3 243.3 568.3 247 V262 Q570 272 579 276 Q592 279 601 284 L602 286 Z" fill="#8a4b42"/><path d="M557 245 V285 H563 V262 Z" fill="#733a34"/>
<path d="M535 258 L503 286 H568 Z" fill="#5b94a6"/><path d="M535 258 V286 H568 Z" fill="#4a8093"/>
<path d="M535 254.5 L522.5 266 L527.5 264 L530 269 L533.5 264.5 L537.8 269.5 L540 264 L546.5 266.5 Z" fill="#fff"/><path d="M535 254 L526.5 262 L530 261.4 L531.8 265.6 L534.5 261.6 L537.6 266 L539.4 261.4 L543.4 263 Z" fill="#f26b2a"/><path d="M531.4 256.5 h7.2 l1.6 2.2 h-10.6 Z" fill="#f9b27a"/>
<path d="M529.5 254.5 a3.4 3.4 0 0 1 .2 -6.4 a4.6 4.6 0 0 1 8.6 -1.6 a3.6 3.6 0 0 1 3 6.2 a2.6 2.6 0 0 1 -2 1.8 Z" fill="#fff"/>
<path d="M482 286 Q494 284 497.5 274 Q499 266.5 494 264.5 Q490.5 263.5 488.5 266 Q492.5 261 498.5 262.5 Q506 266 505.5 276 Q505 283 503 286 Z" fill="#2ba7df"/><path d="M488.5 266 Q490 262 495 261.5 Q491 263.5 490 266.5 Z" fill="#fff"/><path d="M497.5 274 Q499 266.5 494 264.5 Q501 266 500.5 275 Q500 282 497 286 H490 Q496 281 497.5 274 Z" fill="#7fd3f3"/>
<path d="M480 283.5 l9 -1.6 l.4 1 l-9 2 Z" fill="#f7941d"/><path d="M484.3 276 l1.2 5.5 M484.3 277.5 l-2 1.2 M484.3 277.5 l2.2 -.8" stroke="#c98b6b" stroke-width=".9"/><circle cx="484.2" cy="275" r="1" fill="#7a4a2a"/><path d="M483.4 279.5 h2 v1.6 h-2 Z" fill="#e84a8a"/>
<path d="M564 286 Q569 277 576 275.5 Q584 277 592 286 Z" fill="#2a8f86"/><path d="M576 275.5 Q584 277 592 286 H581 Z" fill="#1f7d75"/>
<path d="M593 286 v-6 M590.8 283.5 v-2 M590.8 283.5 h2.2 M595.4 282.5 v-2 M595.4 282.5 h-2.2 M599 286 v-4" stroke="#2e9e4a" stroke-width="1.1" fill="none"/>
<circle cx="581" cy="269" r="2" fill="#fff" stroke="#e5352f" stroke-width="1.1"/><path d="M581 271 v3.2" stroke="#e5352f" stroke-width=".9"/>
<circle cx="545.6" cy="235.6" r="2" fill="#777" stroke="#3a3a3a" stroke-width="1"/><circle cx="551.6" cy="240.6" r="2" fill="#777" stroke="#3a3a3a" stroke-width="1"/><path d="M545.6 235.6 L550 234 L551.6 240.6 M550 234 L551 231.6" stroke="#3a3a3a" stroke-width="1.2" fill="none"/><path d="M549.2 231 h3.4 v4.4 h-3.4 Z" fill="#555"/><circle cx="551.2" cy="230.2" r="1.4" fill="#3a3a3a"/>
</g>
<path d="M536 287 L545.5 362 Q548 370 550.5 362 L560 287 Z" fill="#2a1f1a"/>
<path d="M468.0 287.0 L471.6 301.0 L475.1 306.2 L478.7 310.1 L482.3 313.4 L485.9 316.3 L489.4 318.8 L493.0 321.2 L496.6 323.3 L500.2 325.4 L503.8 327.3 L507.3 329.1 L510.9 330.8 L514.5 332.4 L518.0 334.0 L521.6 335.5 L525.2 337.0 L528.8 338.4 L532.4 339.8 L535.9 341.1 L539.5 342.4 L543.1 343.6 L546.6 344.9 L550.2 344.4 L553.8 342.8 L557.4 341.2 L561.0 339.5 L564.5 337.7 L568.1 335.9 L571.7 334.0 L575.2 331.9 L578.8 329.8 L582.4 327.6 L586.0 325.1 L589.5 322.5 L593.1 319.7 L596.7 316.5 L600.3 312.8 L603.9 308.4 L607.4 302.6 L611.0 287.0 Z" fill="#3d2c1f"/>
<path d="M468.0 287 L471.3 305.8 Q472.7 311.6 476.0 305.8 L483.8 287 Z M468.9 287 L475.8 312.8 Q478.7 320.7 481.6 312.8 L488.5 287 Z M478.7 287 L484.4 319.4 Q486.8 329.4 489.3 319.4 L495.0 287 Z M486.1 287 L492.0 326.3 Q494.6 338.5 497.1 326.3 L503.0 287 Z M492.3 287 L497.9 331.5 Q500.3 345.3 502.7 331.5 L508.3 287 Z M498.4 287 L505.1 336.2 Q507.9 351.4 510.8 336.2 L517.4 287 Z M507.4 287 L512.9 340.5 Q515.2 357.1 517.6 340.5 L523.1 287 Z M513.7 287 L520.7 343.5 Q523.7 361.0 526.7 343.5 L533.7 287 Z M525.0 287 L531.2 349.2 Q533.9 368.4 536.6 349.2 L542.9 287 Z M531.6 287 L538.4 351.4 Q541.3 371.4 544.2 351.4 L551.0 287 Z M540.5 287 L546.0 353.0 Q548.4 373.4 550.8 353.0 L556.4 287 Z M547.7 287 L554.5 347.5 Q557.5 366.2 560.4 347.5 L567.2 287 Z M557.8 287 L563.6 340.7 Q566.1 357.4 568.6 340.7 L574.4 287 Z M562.7 287 L570.1 336.7 Q573.3 352.1 576.5 336.7 L583.9 287 Z M571.4 287 L577.0 331.8 Q579.4 345.7 581.8 331.8 L587.4 287 Z M576.6 287 L583.4 331.5 Q586.4 345.2 589.3 331.5 L596.1 287 Z M584.6 287 L590.9 322.3 Q593.6 333.3 596.2 322.3 L602.5 287 Z M590.2 287 L597.5 315.8 Q600.6 324.8 603.7 315.8 L611.0 287 Z M599.4 287 L605.0 305.1 Q607.5 310.8 608.5 305.1 L611.0 287 Z " fill="#2a211c"/>
<path d="M468.0 287 L471.0 302.5 Q472.3 307.3 475.1 302.5 L481.8 287 Z M474.0 287 L481.6 317.6 Q484.8 327.0 488.1 317.6 L495.7 287 Z M480.4 287 L489.1 319.4 Q492.8 329.5 496.6 319.4 L505.2 287 Z M493.7 287 L499.7 328.7 Q502.3 341.6 504.9 328.7 L510.9 287 Z M501.1 287 L509.7 334.4 Q513.5 349.1 517.2 334.4 L525.8 287 Z M515.5 287 L522.9 341.4 Q526.1 358.2 529.3 341.4 L536.8 287 Z M527.8 287 L534.7 346.0 Q537.6 364.2 540.6 346.0 L547.5 287 Z M537.6 287 L544.1 342.4 Q546.9 359.5 549.7 342.4 L556.2 287 Z M547.4 287 L553.9 345.4 Q556.7 363.5 559.5 345.4 L566.0 287 Z M560.0 287 L566.6 333.2 Q569.4 347.5 572.2 333.2 L578.8 287 Z M570.4 287 L576.8 330.2 Q579.6 343.5 582.3 330.2 L588.8 287 Z M581.9 287 L588.6 321.1 Q591.4 331.7 594.3 321.1 L601.0 287 Z M593.6 287 L600.8 308.3 Q603.9 314.8 606.0 308.3 L611.0 287 Z " fill="#3d2c1f"/>
<path d="M468.0 287 L471.0 300.1 Q472.3 304.2 475.7 300.1 L483.7 287 Z M475.8 287 L483.3 314.1 Q486.5 322.5 489.7 314.1 L497.2 287 Z M493.7 287 L500.0 316.7 Q502.7 325.8 505.4 316.7 L511.7 287 Z M505.9 287 L513.6 325.5 Q516.9 337.4 520.2 325.5 L527.9 287 Z M521.1 287 L529.0 323.3 Q532.4 334.6 535.7 323.3 L543.6 287 Z M539.2 287 L545.7 335.1 Q548.5 350.0 551.3 335.1 L557.9 287 Z M557.5 287 L563.9 334.2 Q566.6 348.8 569.3 334.2 L575.6 287 Z M567.6 287 L574.7 322.8 Q577.8 333.8 580.8 322.8 L588.0 287 Z M580.2 287 L587.3 314.9 Q590.4 323.6 593.4 314.9 L600.6 287 Z M594.1 287 L601.7 300.0 Q604.9 304.1 606.8 300.0 L611.0 287 Z " fill="#553c27"/>
<path d="M468.0 287 L470.9 298.7 Q472.1 302.3 474.9 298.7 L481.2 287 Z M475.7 287 L483.6 305.0 Q486.9 310.6 490.3 305.0 L498.2 287 Z M494.2 287 L501.3 310.4 Q504.4 317.6 507.5 310.4 L514.6 287 Z M514.1 287 L521.4 323.5 Q524.5 334.8 527.7 323.5 L535.0 287 Z M532.2 287 L539.8 326.2 Q543.0 338.3 546.2 326.2 L553.7 287 Z M546.7 287 L555.2 317.9 Q558.8 327.4 562.4 317.9 L570.9 287 Z M568.9 287 L577.3 315.4 Q580.9 324.3 584.4 315.4 L592.8 287 Z M590.7 287 L598.5 304.1 Q601.8 309.4 604.6 304.1 L611.0 287 Z " fill="#76563a"/>
<path d="M468.0 287 L469.6 291.6 Q470.3 293.0 473.4 291.6 L480.7 287 Z M489.3 287 L496.5 302.9 Q499.6 307.8 502.7 302.9 L510.0 287 Z M509.2 287 L517.8 308.0 Q521.5 314.4 525.2 308.0 L533.9 287 Z M535.3 287 L542.3 309.9 Q545.3 317.0 548.3 309.9 L555.3 287 Z M552.7 287 L559.6 307.5 Q562.6 313.8 565.5 307.5 L572.4 287 Z M579.4 287 L587.1 299.9 Q590.4 303.9 593.8 299.9 L601.5 287 Z " fill="#94704c"/>
<path d="M468.0 287 L469.0 289.5 Q469.5 290.3 473.0 289.5 L481.3 287 Z M496.7 287 L504.0 299.4 Q507.1 303.2 510.3 299.4 L517.6 287 Z M519.8 287 L529.4 301.5 Q533.5 306.0 537.6 301.5 L547.1 287 Z M543.0 287 L552.1 300.0 Q555.9 304.0 559.8 300.0 L568.8 287 Z M574.4 287 L581.4 298.5 Q584.4 302.1 587.4 298.5 L594.4 287 Z M595.2 287 L604.0 290.7 Q607.8 291.9 608.7 290.7 L611.0 287 Z " fill="#ae8b67"/>
<path d="M586.4 334.3 v5.0 M573.3 340.2 v6.1 M556.7 350.1 v5.6 M523.7 347.9 v7.1 M591.4 322.6 v6.7 M541.3 356.9 v8.3 M579.4 334.7 v6.2 M546.9 346.6 v5.8 M526.1 345.5 v7.3 M557.5 352.4 v7.7 M492.8 320.7 v8.6 M593.6 324.0 v5.6 M600.6 316.6 v8.4 M566.1 344.8 v8.9 M533.9 354.3 v8.9 M603.9 308.0 v4.6 M548 365 V376.5 M551.2 360 v9 M544.6 358 v8" stroke="#58585a" stroke-width="1.2" fill="none"/>
<path d="M466 285.8 Q466 284.8 467.5 284.8 H611.5 Q613 284.8 613 285.8 V290.5 Q613 291.5 611.5 291.5 H467.5 Q466 291.5 466 290.5 Z" fill="#cf8580"/>
<path d="M468.0 290.5 q1.5 9.7 3.1 0 Z M471.4 290.5 q2.1 3.6 4.3 0 Z M476.5 290.5 q2.5 4.5 5.0 0 Z M483.4 290.5 q1.8 6.2 3.6 0 Z M488.5 290.5 q1.5 8.8 3.0 0 Z M491.8 290.5 q1.5 3.1 3.1 0 Z M495.6 290.5 q1.8 9.3 3.5 0 Z M500.3 290.5 q1.4 4.8 2.8 0 Z M506.1 290.5 q1.3 7.3 2.7 0 Z M509.8 290.5 q2.1 5.4 4.2 0 Z M516.1 290.5 q1.9 7.5 3.7 0 Z M522.5 290.5 q2.0 4.0 4.0 0 Z M526.7 290.5 q2.4 6.4 4.9 0 Z M532.1 290.5 q2.4 7.1 4.9 0 Z M539.2 290.5 q2.4 5.0 4.7 0 Z M544.9 290.5 q2.3 3.9 4.7 0 Z M551.9 290.5 q1.4 7.8 2.7 0 Z M556.8 290.5 q2.4 8.9 4.9 0 Z M563.2 290.5 q1.5 4.1 3.0 0 Z M567.7 290.5 q1.9 3.5 3.8 0 Z M574.2 290.5 q1.9 7.9 3.8 0 Z M578.7 290.5 q1.6 3.1 3.1 0 Z M582.8 290.5 q1.6 6.0 3.2 0 Z M587.1 290.5 q2.3 9.2 4.6 0 Z M592.2 290.5 q1.7 4.2 3.5 0 Z M597.7 290.5 q2.5 4.4 4.9 0 Z M604.9 290.5 q1.6 3.1 3.3 0 Z " fill="#b56c6a"/><rect x="466" y="289" width="147" height="2.5" fill="#b56c6a" rx="1"/>
<g>
<path d="M289.4 459.8 a2 2 0 0 1 1.08 -2.7 a2.6 2.6 0 0 1 4.14 -0.54 a2 2 0 0 1 1.9800000000000002 3.24 Z" fill="#fff"/><path d="M352.8 475.1 a2 2 0 0 1 0.96 -2.4000000000000004 a2.6 2.6 0 0 1 3.6799999999999997 -0.48 a2 2 0 0 1 1.7600000000000002 2.8800000000000003 Z" fill="#fff"/><path d="M245.2 495.9 a2 2 0 0 1 0.84 -2.0999999999999996 a2.6 2.6 0 0 1 3.2199999999999998 -0.42 a2 2 0 0 1 1.54 2.52 Z" fill="#fff"/>
<circle cx="272.8" cy="480.3" r="17.4" fill="none" stroke="#1f807c" stroke-width="2" stroke-dasharray="2.2 .9"/><circle cx="272.8" cy="480.3" r="14.6" fill="none" stroke="#9ccfcb" stroke-width=".5"/><path d="M272.8 480.3 L289.8 480.3 M272.8 480.3 L287.5 488.8 M272.8 480.3 L281.3 495.0 M272.8 480.3 L272.8 497.3 M272.8 480.3 L264.3 495.0 M272.8 480.3 L258.1 488.8 M272.8 480.3 L255.8 480.3 M272.8 480.3 L258.1 471.8 M272.8 480.3 L264.3 465.6 M272.8 480.3 L272.8 463.3 M272.8 480.3 L281.3 465.6 M272.8 480.3 L287.5 471.8 " stroke="#7fb9b6" stroke-width=".45"/><circle cx="272.8" cy="480.3" r="1.6" fill="#2f8f8c"/>
<path d="M272.8 480.3 L262 514 M272.8 480.3 L280.6 514" stroke="#2f8f8c" stroke-width="1.1"/>
<path d="M306.3 414 L305.8 421 H305 V424 H305.6 L303.8 452 H302.6 V455 H303.5 Q302 476 297.5 491 H301.5 Q303 481 306.3 479.5 Q309.6 481 311.1 491 H315.1 Q310.6 476 309.1 455 H310 V452 H308.8 L307 424 H307.6 V421 H306.8 Z" fill="#4b4d4f"/>
<path d="M297.5 491 Q294.5 503 290.5 513 H296.5 Q299 498 306.3 496.5 Q313.6 498 316.1 513 H322.1 Q318.1 503 315.1 491 Z" fill="#4b4d4f"/>
<path d="M293.4 472 L258 514 H318 Z" fill="#bb8c5d"/><path d="M293.4 472 L303 514 H318.5 Z" fill="#9a6c42"/>
<path d="M267.6 489.5 L246.5 514 H290 Z" fill="#c89f70"/><path d="M267.6 489.5 L273 514 H290 Z" fill="#b08355"/>
<path d="M322.8 430.5 L321.6 441 L319 445.5 H326.6 L324 441 Z" fill="#a8743f"/><rect x="317.3" y="445.5" width="11" height="3" fill="#94632f"/><rect x="316.4" y="448.5" width="12.8" height="66" fill="#b98650"/><rect x="316.4" y="468.5" width="12.8" height="2" fill="#94632f"/><path d="M318.6 472 V513 M320.8 472 V513 M323 472 V513 M325.2 472 V513 M327.2 472 V513" stroke="#9c6c38" stroke-width=".7"/><rect x="317.6" y="452.5" width="10.4" height="13" fill="#8c5c2b"/><circle cx="322.8" cy="459" r="4.3" fill="#fff" stroke="#6b4520" stroke-width=".7"/><path d="M322.8 459 V456 M322.8 459 l2 1" stroke="#444" stroke-width=".5"/>
<g transform="rotate(4 339 514)"><rect x="331.5" y="462" width="14" height="52" fill="#b9b9b9"/><rect x="338.5" y="462" width="7" height="52" fill="#9a9a9a"/><rect x="333" y="457.5" width="11" height="5" fill="#c8c8c8"/><path d="M331 468.5 h15 M331 476 h15 M331 483.5 h15 M331 491 h15 M331 498.5 h15 M331 506 h15" stroke="#ececec" stroke-width="1.2"/><path d="M333 462 V514 M335.5 462 V514 M338 462 V514 M340.5 462 V514 M343 462 V514" stroke="#6e6e6e" stroke-width=".6" opacity=".8"/></g>
<path d="M348.5 514 V485 Q348.5 480.5 353 480.5 H357.5 Q361.5 480.5 361.5 485 V514 Z" fill="#6d4c39"/><path d="M350 488.5 h10 v2 h-10 Z M354 491 h2.4 v9 h-2.4 Z M351.5 503.5 h7 v1.6 h-7 Z" fill="#4a3226"/>
<path d="M362 514 V493 Q362 489.5 365.5 489.5 H368 Q371.5 489.5 371.5 493 V514 Z" fill="#7a5844"/><path d="M363.2 495.5 h7 v1.6 h-7 Z M366 498 h1.8 v6.5 h-1.8 Z M364.2 507 h5 v1.3 h-5 Z" fill="#4a3226"/>
<rect x="293.4" y="502.6" width="17.8" height="9.6" rx="1" fill="#d8232a"/><rect x="294.4" y="503.8" width="15.8" height="2.2" fill="#f3d9d9"/><rect x="294.4" y="507.4" width="15.8" height="2" fill="#f3d9d9"/><path d="M297 503.8 v5.6 M300 503.8 v5.6 M303 503.8 v5.6 M306 503.8 v5.6" stroke="#d8232a" stroke-width=".7"/><circle cx="297" cy="512.4" r="1.2" fill="#222"/><circle cx="307.5" cy="512.4" r="1.2" fill="#222"/>
<path d="M259.5 502 q3 -2.5 6 -.5 q-3 -.5 -4 1.5 l.6 10 h-1.2 l-.2 -9.6 q-1.5 -1.6 -3.6 -.6 q1 -1.4 2.4 -.8" fill="#3fa33a"/><path d="M288.5 508 l1 -3 l1 3 v5 h-2 Z" fill="#e8c21a"/>
</g>
<path d="M306.5 516 L316.0 591 Q318.5 599 321.0 591 L330.5 516 Z" fill="#2a1f1a"/>
<path d="M238.5 516.0 L242.1 529.9 L245.6 535.2 L249.2 539.1 L252.8 542.4 L256.3 545.2 L259.9 547.8 L263.4 550.1 L267.0 552.3 L270.6 554.3 L274.1 556.2 L277.7 558.0 L281.2 559.7 L284.8 561.4 L288.4 562.9 L291.9 564.4 L295.5 565.9 L299.1 567.3 L302.6 568.7 L306.2 570.0 L309.8 571.3 L313.3 572.5 L316.9 573.8 L320.4 573.5 L324.0 571.9 L327.6 570.3 L331.1 568.6 L334.7 566.8 L338.2 565.0 L341.8 563.1 L345.4 561.0 L348.9 558.9 L352.5 556.6 L356.1 554.2 L359.6 551.6 L363.2 548.7 L366.8 545.5 L370.3 541.9 L373.9 537.5 L377.4 531.6 L381.0 516.0 Z" fill="#3d2c1f"/>
<path d="M238.5 516 L241.1 532.3 Q242.2 537.3 244.6 532.3 L250.2 516 Z M241.2 516 L248.7 544.9 Q251.9 553.8 255.1 544.9 L262.5 516 Z M251.5 516 L257.8 552.4 Q260.5 563.7 263.2 552.4 L269.5 516 Z M256.5 516 L263.6 557.1 Q266.6 569.9 269.6 557.1 L276.7 516 Z M264.6 516 L270.9 562.4 Q273.6 576.7 276.3 562.4 L282.6 516 Z M270.2 516 L278.0 568.4 Q281.3 584.6 284.6 568.4 L292.4 516 Z M282.9 516 L288.5 567.0 Q290.9 582.7 293.3 567.0 L298.9 516 Z M289.0 516 L295.2 574.8 Q297.9 593.1 300.6 574.8 L306.9 516 Z M297.8 516 L304.6 578.5 Q307.5 597.8 310.4 578.5 L317.2 516 Z M308.1 516 L313.5 582.0 Q315.8 602.4 318.2 582.0 L323.6 516 Z M313.3 516 L319.7 582.0 Q322.5 602.4 325.2 582.0 L331.6 516 Z M320.3 516 L327.9 571.7 Q331.2 588.9 334.5 571.7 L342.1 516 Z M331.9 516 L337.3 569.3 Q339.6 585.7 341.9 569.3 L347.3 516 Z M335.2 516 L342.7 567.9 Q345.9 583.9 349.2 567.9 L356.7 516 Z M347.4 516 L353.3 560.5 Q355.9 574.2 358.4 560.5 L364.3 516 Z M355.3 516 L362.0 553.3 Q364.8 564.8 367.7 553.3 L374.3 516 Z M364.7 516 L370.8 541.6 Q373.4 549.6 375.7 541.6 L381.0 516 Z " fill="#2a211c"/>
<path d="M238.5 516 L239.8 525.8 Q240.4 528.9 243.6 525.8 L251.3 516 Z M239.3 516 L246.8 538.6 Q250.0 545.6 253.3 538.6 L260.8 516 Z M252.1 516 L258.3 549.6 Q260.9 560.0 263.6 549.6 L269.8 516 Z M261.4 516 L267.4 557.1 Q270.0 569.8 272.6 557.1 L278.6 516 Z M268.2 516 L274.6 558.4 Q277.4 571.6 280.1 558.4 L286.5 516 Z M275.2 516 L282.7 562.3 Q285.8 576.6 289.0 562.3 L296.5 516 Z M285.6 516 L293.1 565.5 Q296.3 580.8 299.5 565.5 L307.0 516 Z M293.3 516 L301.2 569.6 Q304.6 586.2 308.0 569.6 L315.8 516 Z M302.5 516 L311.0 570.0 Q314.7 586.7 318.3 570.0 L326.9 516 Z M312.6 516 L320.1 569.5 Q323.4 586.1 326.6 569.5 L334.1 516 Z M324.8 516 L331.8 566.1 Q334.9 581.6 337.9 566.1 L345.0 516 Z M330.7 516 L339.3 560.1 Q343.0 573.8 346.8 560.1 L355.4 516 Z M343.7 516 L351.6 557.6 Q355.0 570.5 358.4 557.6 L366.3 516 Z M356.3 516 L363.2 546.7 Q366.2 556.2 369.1 546.7 L376.1 516 Z M370.0 516 L376.1 529.5 Q378.7 533.7 379.4 529.5 L381.0 516 Z " fill="#3d2c1f"/>
<path d="M238.5 516 L239.8 523.6 Q240.3 525.9 243.8 523.6 L252.0 516 Z M241.7 516 L248.1 536.1 Q250.8 542.3 253.6 536.1 L259.9 516 Z M251.3 516 L258.5 542.1 Q261.6 550.2 264.7 542.1 L271.9 516 Z M264.1 516 L271.8 550.4 Q275.1 561.1 278.4 550.4 L286.0 516 Z M282.9 516 L290.8 561.5 Q294.3 575.6 297.7 561.5 L305.6 516 Z M301.9 516 L309.8 561.5 Q313.2 575.6 316.6 561.5 L324.5 516 Z M314.5 516 L321.3 563.2 Q324.3 577.9 327.2 563.2 L334.0 516 Z M332.9 516 L340.3 554.4 Q343.5 566.3 346.7 554.4 L354.1 516 Z M344.2 516 L351.6 542.1 Q354.8 550.1 357.9 542.1 L365.3 516 Z M358.3 516 L364.1 542.2 Q366.6 550.3 369.0 542.2 L374.8 516 Z " fill="#553c27"/>
<path d="M238.5 516 L240.9 526.2 Q241.9 529.3 244.5 526.2 L250.7 516 Z M245.0 516 L253.0 537.4 Q256.4 544.0 259.8 537.4 L267.7 516 Z M270.0 516 L276.4 542.3 Q279.2 550.4 281.9 542.3 L288.3 516 Z M286.4 516 L292.6 555.9 Q295.2 568.3 297.9 555.9 L304.0 516 Z M305.6 516 L311.9 554.7 Q314.5 566.7 317.2 554.7 L323.5 516 Z M315.8 516 L324.5 551.0 Q328.2 561.8 331.9 551.0 L340.6 516 Z M329.4 516 L337.4 546.5 Q340.8 555.9 344.3 546.5 L352.3 516 Z M348.8 516 L357.0 536.1 Q360.4 542.3 363.9 536.1 L372.1 516 Z M366.6 516 L375.3 523.4 Q378.9 525.7 379.6 523.4 L381.0 516 Z " fill="#76563a"/>
<path d="M238.5 516 L241.1 522.9 Q242.2 525.1 244.9 522.9 L251.4 516 Z M256.5 516 L265.5 534.5 Q269.4 540.2 273.2 534.5 L282.3 516 Z M282.6 516 L290.2 537.7 Q293.5 544.4 296.7 537.7 L304.3 516 Z M305.3 516 L314.4 538.0 Q318.4 544.9 322.3 538.0 L331.4 516 Z M330.5 516 L338.0 534.6 Q341.3 540.4 344.5 534.6 L352.1 516 Z M347.4 516 L356.0 532.0 Q359.6 537.0 363.3 532.0 L371.9 516 Z " fill="#94704c"/>
<path d="M238.5 516 L239.9 518.5 Q240.5 519.3 244.0 518.5 L252.0 516 Z M255.1 516 L262.1 525.6 Q265.1 528.6 268.0 525.6 L275.0 516 Z M290.7 516 L299.0 531.1 Q302.5 535.8 306.1 531.1 L314.4 516 Z M314.1 516 L322.2 528.3 Q325.7 532.2 329.2 528.3 L337.3 516 Z M346.7 516 L354.0 524.8 Q357.1 527.5 360.3 524.8 L367.6 516 Z " fill="#ae8b67"/>
<path d="M355.9 563.3 v4.3 M260.5 554.2 v6.5 M331.2 576.0 v6.2 M251.9 545.7 v7.2 M281.3 572.2 v5.8 M270.0 559.4 v4.7 M297.9 579.5 v8.2 M355.0 560.1 v5.2 M290.9 570.6 v5.1 M273.6 565.4 v6.2 M315.8 587.6 v8.7 M364.8 555.1 v7.5 M304.6 573.6 v4.7 M366.2 547.7 v4.5 M314.7 574.0 v6.5 M266.6 559.5 v4.3 M318.5 594 V605.5 M321.7 589 v9 M315.1 587 v8" stroke="#58585a" stroke-width="1.2" fill="none"/>
<path d="M236.5 514.6 Q236.5 513.4 238 513.4 H381.5 Q383 513.4 383 514.6 V519.4 Q383 520.6 381.5 520.6 H238 Q236.5 520.6 236.5 519.4 Z" fill="#2b2b2d"/><rect x="237.5" y="514" width="144.5" height="1.2" fill="#4a4a4c"/>
<path d="M239.0 520 q2.2 4.6 4.4 0 Z M246.4 520 q2.8 2.0 5.6 0 Z M257.5 520 q2.8 2.6 5.7 0 Z M269.1 520 q2.4 2.3 4.8 0 Z M278.6 520 q2.6 5.2 5.1 0 Z M290.7 520 q1.7 3.7 3.5 0 Z M297.0 520 q2.3 8.5 4.5 0 Z M307.6 520 q2.7 4.7 5.3 0 Z M320.2 520 q1.7 4.0 3.3 0 Z M330.2 520 q2.6 5.0 5.2 0 Z M338.0 520 q1.9 3.5 3.8 0 Z M345.8 520 q2.7 3.4 5.4 0 Z M359.4 520 q2.8 2.4 5.6 0 Z M369.7 520 q2.2 2.2 4.5 0 Z M379.1 520 q2.9 2.8 5.7 0 Z " fill="#2b2b2d"/>
<g>
<path d="M506.0 480.6 a2 2 0 0 1 0.96 -2.4000000000000004 a2.6 2.6 0 0 1 3.6799999999999997 -0.48 a2 2 0 0 1 1.7600000000000002 2.8800000000000003 Z" fill="#fff"/><path d="M565.4 476.8 a2 2 0 0 1 1.08 -2.7 a2.6 2.6 0 0 1 4.14 -0.54 a2 2 0 0 1 1.9800000000000002 3.24 Z" fill="#fff"/><path d="M480.3 489.2 a2 2 0 0 1 0.72 -1.7999999999999998 a2.6 2.6 0 0 1 2.76 -0.36 a2 2 0 0 1 1.32 2.16 Z" fill="#fff"/><path d="M586.8000000000001 489.2 a2 2 0 0 1 0.72 -1.7999999999999998 a2.6 2.6 0 0 1 2.76 -0.36 a2 2 0 0 1 1.32 2.16 Z" fill="#fff"/><path d="M537.0 465.0 a2 2 0 0 1 0.6 -1.5 a2.6 2.6 0 0 1 2.3 -0.3 a2 2 0 0 1 1.1 1.8 Z" fill="#fff"/>
<g><path d="M581 449.5 C595.1 449.5 595.7 461.7 583.5 473 L578.5 473 C566.3 461.7 566.9 449.5 581 449.5 Z" fill="#e8383d"/><path d="M581 449.5 C592.9 449.5 593.3 461.7 583.2 473 L578.8 473 C568.7 461.7 569.1 449.5 581 449.5 Z" fill="#f7a41d"/><path d="M581 449.5 C589.8 449.5 590.1 461.7 582.8 473 L579.2 473 C571.9 461.7 572.2 449.5 581 449.5 Z" fill="#3aa6dd"/><path d="M581 449.5 C589.8 449.5 590.1 461.7 582.8 473 L581 473 Z" fill="#ef5a2a"/><path d="M581 449.5 C586.1 449.5 586.3 461.7 582.3 473 L579.7 473 C575.7 461.7 575.9 449.5 581 449.5 Z" fill="#f5e02a"/><rect x="578.5" y="472.4" width="5.0" height="1.6" fill="#d6242c"/><path d="M579.1 474 L579.7 479.1 M582.9 474 L582.3 479.1" stroke="#9a7a5a" stroke-width=".45"/><rect x="579.4" y="479.1" width="3.2" height="2.6" fill="#b5672f"/></g>
<circle cx="523" cy="479.2" r="4.2" fill="#f7e04a"/>
<path d="M532 500.2 Q548 497.2 566 500.2 Z" fill="#4bb548"/>
<path d="M548.6 499 Q549.6 486 545.4 474 L547.6 473.4 Q552.8 486 552 499 Z" fill="#8a5a34"/>
<path d="M546.5 473.5 Q538 466.5 529.5 472.5 Q537 470.5 543.2 475 Q535 474 531 482 Q537.5 476.5 545 477.5 Q541 481 541.2 487 Q543.5 480.5 547.6 478.2 Q551 480.5 551.4 486 Q553.4 480 549.8 476.2 Q556 476 560.5 481.5 Q558.6 474.6 551.6 473.2 Q559 470 566.5 474.5 Q561 466.4 551 469.8 Q554.5 465.6 560.5 465 Q552.4 462.4 548 469.4 Q545 463.6 537 464.8 Q543.6 466.6 546.5 473.5 Z" fill="#3bb24a"/>
<path d="M559.5 497 Q560.5 490 558 484.5 L559.4 484 Q562.6 490 562 497 Z" fill="#8a5a34"/><path d="M558.6 484.6 Q553.5 480.6 548.6 484 Q553.6 483 556.8 485.6 Q553 487 552.4 491 Q555.4 487.4 559.2 487 Q562.6 488 563.6 492 Q564.2 487.6 561.4 485.8 Q565.6 485 568.6 488 Q566.6 483 561.4 483.4 Q564 480.6 567.6 480.6 Q562.6 478.6 559.8 482.4 Q557.6 479 553.4 479.6 Q557.2 481 558.6 484.6 Z" fill="#3bb24a"/>
<path d="M488.5 492 H521.5 Q522.5 497 519 501.5 H492 Q488.5 498 488.5 492 Z" fill="#fff"/><path d="M489 495.5 h33 v1.3 h-33 Z" fill="#e86f86"/><path d="M493 492 V488.5 H515 L517.5 492 Z" fill="#f1f1f1"/><path d="M496 488.5 V486 H510 L512 488.5 Z" fill="#fff"/><path d="M500 486 v-2 h6 l1 2 Z" fill="#3b4a6b"/><path d="M494.5 490 h20" stroke="#e86f86" stroke-width=".8" stroke-dasharray="1.4 1"/><path d="M491 498.3 h27" stroke="#bfbfbf" stroke-width=".5" stroke-dasharray="1 1.2"/>
<path d="M529.6 492.6 Q534.3 486.2 539.6 491.6 Z" fill="#f15a29"/><path d="M532.6 489.6 Q534.3 488.6 536.4 489.4 L536.8 491.9 L532.4 492.3 Z" fill="#f9d423"/><path d="M534.6 492 l.7 6.5" stroke="#7a5a3a" stroke-width=".6"/>
<path d="M567.5 498 h7.5 l-1.2 2 h-5.2 Z" fill="#8a4a2a"/><path d="M571 491.5 v6.2 h-3.4 Z" fill="#f3a73b"/><path d="M571.6 493 v4.7 h2.6 Z" fill="#e8872a"/>
</g>
<path d="M535.5 517 L545.0 589.5 Q547.5 597.5 550.0 589.5 L559.5 517 Z" fill="#2a1f1a"/>
<path d="M469.5 517.0 L473.0 530.5 L476.4 535.6 L479.9 539.4 L483.4 542.5 L486.8 545.3 L490.3 547.8 L493.7 550.0 L497.2 552.1 L500.7 554.1 L504.1 555.9 L507.6 557.6 L511.1 559.3 L514.5 560.9 L518.0 562.4 L521.4 563.9 L524.9 565.3 L528.4 566.7 L531.8 568.0 L535.3 569.3 L538.8 570.5 L542.2 571.7 L545.7 572.9 L549.1 572.8 L552.6 571.3 L556.1 569.7 L559.5 568.0 L563.0 566.3 L566.5 564.5 L569.9 562.7 L573.4 560.7 L576.8 558.7 L580.3 556.5 L583.8 554.1 L587.2 551.6 L590.7 548.8 L594.1 545.7 L597.6 542.1 L601.1 537.9 L604.5 532.2 L608.0 517.0 Z" fill="#3d2c1f"/>
<path d="M469.5 517 L471.3 529.5 Q472.0 533.4 474.6 529.5 L480.5 517 Z M472.3 517 L479.1 545.1 Q482.0 553.8 484.9 545.1 L491.7 517 Z M481.2 517 L487.6 552.7 Q490.3 563.7 493.0 552.7 L499.3 517 Z M488.2 517 L495.5 558.3 Q498.6 571.1 501.8 558.3 L509.1 517 Z M499.0 517 L505.5 561.0 Q508.3 574.6 511.0 561.0 L517.5 517 Z M504.3 517 L511.5 564.2 Q514.6 578.9 517.7 564.2 L524.8 517 Z M513.4 517 L520.4 567.5 Q523.3 583.1 526.3 567.5 L533.2 517 Z M524.9 517 L530.4 577.6 Q532.7 596.4 535.0 577.6 L540.5 517 Z M533.9 517 L539.8 580.5 Q542.3 600.2 544.9 580.5 L550.8 517 Z M543.3 517 L549.0 581.0 Q551.4 600.8 553.9 581.0 L559.5 517 Z M546.7 517 L554.4 577.0 Q557.6 595.5 560.9 577.0 L568.6 517 Z M560.1 517 L565.6 568.3 Q567.9 584.2 570.3 568.3 L575.8 517 Z M566.7 517 L573.6 562.1 Q576.5 576.1 579.5 562.1 L586.4 517 Z M575.7 517 L583.2 555.6 Q586.4 567.5 589.6 555.6 L597.1 517 Z M582.6 517 L589.7 550.4 Q592.7 560.8 595.7 550.4 L602.7 517 Z M592.0 517 L598.6 539.5 Q601.5 546.5 603.4 539.5 L608.0 517 Z " fill="#2a211c"/>
<path d="M469.5 517 L470.6 526.7 Q471.0 529.7 474.1 526.7 L481.4 517 Z M469.5 517 L477.3 540.5 Q480.6 547.7 484.0 540.5 L492.1 517 Z M481.8 517 L489.5 549.1 Q492.9 559.0 496.2 549.1 L504.0 517 Z M491.9 517 L498.1 552.2 Q500.7 563.2 503.3 552.2 L509.5 517 Z M500.9 517 L509.3 562.2 Q512.9 576.2 516.5 562.2 L524.9 517 Z M509.4 517 L517.2 561.8 Q520.5 575.6 523.9 561.8 L531.7 517 Z M521.8 517 L529.5 570.8 Q532.9 587.5 536.2 570.8 L544.0 517 Z M533.4 517 L540.5 575.5 Q543.5 593.6 546.6 575.5 L553.7 517 Z M546.8 517 L553.5 569.8 Q556.3 586.2 559.1 569.8 L565.8 517 Z M556.5 517 L564.3 563.9 Q567.7 578.5 571.1 563.9 L578.9 517 Z M565.0 517 L573.7 557.6 Q577.4 570.2 581.1 557.6 L589.8 517 Z M574.4 517 L582.3 552.1 Q585.7 563.0 589.0 552.1 L596.9 517 Z M588.3 517 L595.1 543.4 Q598.1 551.6 601.0 543.4 L607.9 517 Z " fill="#3d2c1f"/>
<path d="M469.5 517 L472.7 530.5 Q474.0 534.6 477.3 530.5 L485.0 517 Z M477.8 517 L483.9 535.6 Q486.5 541.4 489.1 535.6 L495.2 517 Z M488.0 517 L495.4 541.2 Q498.6 548.7 501.8 541.2 L509.2 517 Z M501.0 517 L508.2 546.8 Q511.2 556.0 514.3 546.8 L521.5 517 Z M515.7 517 L522.0 558.7 Q524.7 571.6 527.4 558.7 L533.6 517 Z M524.4 517 L532.7 561.2 Q536.3 574.9 539.8 561.2 L548.1 517 Z M543.0 517 L550.1 560.7 Q553.2 574.2 556.2 560.7 L563.4 517 Z M560.9 517 L569.0 557.3 Q572.4 569.7 575.9 557.3 L583.9 517 Z M572.9 517 L580.1 552.5 Q583.2 563.5 586.3 552.5 L593.5 517 Z M589.4 517 L596.4 536.7 Q599.4 542.8 602.0 536.7 L608.0 517 Z " fill="#553c27"/>
<path d="M469.5 517 L472.2 525.2 Q473.4 527.7 476.9 525.2 L485.0 517 Z M480.6 517 L488.3 537.4 Q491.5 543.7 494.8 537.4 L502.4 517 Z M499.3 517 L507.8 550.6 Q511.5 561.1 515.1 550.6 L523.7 517 Z M518.3 517 L524.7 555.3 Q527.4 567.2 530.1 555.3 L536.5 517 Z M534.8 517 L543.1 561.0 Q546.6 574.6 550.2 561.0 L558.4 517 Z M551.4 517 L559.0 548.5 Q562.2 558.3 565.5 548.5 L573.1 517 Z M572.2 517 L580.1 540.0 Q583.4 547.2 586.8 540.0 L594.7 517 Z M590.6 517 L598.2 529.5 Q601.4 533.4 603.4 529.5 L608.0 517 Z " fill="#76563a"/>
<path d="M469.5 517 L471.5 522.4 Q472.4 524.1 475.2 522.4 L481.6 517 Z M489.1 517 L497.8 530.6 Q501.5 534.8 505.2 530.6 L513.9 517 Z M517.0 517 L525.4 540.5 Q529.0 547.8 532.5 540.5 L540.9 517 Z M533.3 517 L541.8 538.5 Q545.4 545.2 549.1 538.5 L557.6 517 Z M562.3 517 L569.5 535.3 Q572.6 540.9 575.7 535.3 L582.9 517 Z M578.5 517 L587.3 529.3 Q591.1 533.0 594.9 529.3 L603.7 517 Z " fill="#94704c"/>
<path d="M469.5 517 L471.6 520.5 Q472.6 521.6 475.6 520.5 L482.6 517 Z M494.7 517 L501.3 528.3 Q504.1 531.9 507.0 528.3 L513.6 517 Z M521.4 517 L528.0 531.5 Q530.9 536.0 533.7 531.5 L540.3 517 Z M555.0 517 L562.8 527.9 Q566.1 531.3 569.4 527.9 L577.1 517 Z M585.7 517 L594.0 524.0 Q597.6 526.2 600.7 524.0 L608.0 517 Z " fill="#ae8b67"/>
<path d="M567.9 572.1 v5.9 M492.9 550.3 v5.8 M598.1 543.8 v8.3 M557.6 581.8 v4.9 M585.7 553.7 v4.8 M508.3 563.7 v4.4 M542.3 585.9 v8.2 M532.9 574.8 v5.6 M520.5 564.6 v8.5 M586.4 557.6 v5.6 M556.3 573.7 v8.2 M592.7 551.8 v5.0 M577.4 559.9 v8.5 M514.6 567.4 v8.9 M543.5 580.2 v8.4 M482.0 545.8 v7.5 M547.5 592.5 V604.0 M550.7 587.5 v9 M544.1 585.5 v8" stroke="#58585a" stroke-width="1.2" fill="none"/>
<path d="M466.2 503 L611.8 503 L610.4 517 L608.0 518 q-3.4 8.9 -6.9 0 L597.4 518 q-2.8 3.7 -5.6 0 L589.4 518 q-3.0 10.2 -6.1 0 L579.5 518 q-3.7 8.1 -7.4 0 L568.5 518 q-2.8 7.2 -5.6 0 L561.2 518 q-4.3 4.1 -8.6 0 L548.3 518 q-2.6 9.2 -5.3 0 L540.7 518 q-3.3 10.4 -6.6 0 L533.0 518 q-2.6 11.0 -5.2 0 L524.7 518 q-2.7 11.6 -5.4 0 L514.6 518 q-2.7 7.0 -5.5 0 L507.6 518 q-3.1 8.6 -6.3 0 L499.7 518 q-3.9 4.0 -7.8 0 L490.2 518 q-4.1 6.8 -8.3 0 L479.3 518 q-3.7 7.5 -7.4 0 L467.6 518 Z" fill="#f2e6a2"/>
<path d="M466.4 504.5 L611.6 504.5 L611 510 Q560 513 520 512 Q490 511 467 512.5 Z" fill="#f8f1c4"/>
<path d="M469 500.6 H609 L612.4 505.4 Q610.5 511.5 606 511 Q603 510.8 601.5 513 Q600.5 520.5 597.6 521 Q594.5 520.5 594 514 Q592.5 509.5 588 509 Q562 505.6 541 508.6 Q512 512.6 494 510.2 Q489.6 510 489 513.4 Q488.4 519.6 485.4 520 Q482.4 519.6 482 514 Q481.2 510.4 477 510.6 Q470 510.4 466 506 Z" fill="#2fa9e2"/>
<path d="M473 506.4 Q500 508.4 520 506.6 Q548 503.6 580 505.4 Q598 506.6 608 506 L609.6 508 Q605 510 601 510.6 Q594 507.6 588 508 Q562 504.6 541 507.6 Q512 511.6 494 509.2 Q484 508.4 478 509.6 Q473 508.8 473 506.4 Z" fill="#7fd2f4"/>
<path d="M470 501.6 H608.4 L609.4 503 H469.2 Z" fill="#1d8fce"/>
<circle cx="485.4" cy="523.6" r=".9" fill="#2fa9e2"/><circle cx="597.8" cy="524.6" r=".9" fill="#2fa9e2"/>
<circle cx="536.9" cy="509.2" r="4.6" fill="#fff"/><path d="M536.9 509.2 L536.9 504.6 A4.6 4.6 0 0 1 540.9 506.9 Z" fill="#e8383d"/><path d="M536.9 509.2 L540.9 511.5 A4.6 4.6 0 0 1 536.9 513.8 Z" fill="#f9d423"/><path d="M536.9 509.2 L532.9 511.5 A4.6 4.6 0 0 1 532.9 506.9 Z" fill="#3aa0d8"/><path d="M536.9 509.2 L532.9 506.9 A4.6 4.6 0 0 1 536.9 504.6 Z" fill="#3bb24a"/>
<ellipse cx="552.4" cy="506" rx="1.9" ry="3.6" fill="#f5d90a" stroke="#2e6db4" stroke-width=".5" transform="rotate(-10 552.4 506)"/><ellipse cx="557.6" cy="506" rx="1.9" ry="3.6" fill="#f5d90a" stroke="#2e6db4" stroke-width=".5" transform="rotate(10 557.6 506)"/><path d="M551.2 504.5 l1.2 2 l1.2 -2 M556.4 504.5 l1.2 2 l1.2 -2" stroke="#2e6db4" stroke-width=".6" fill="none"/>
</g></svg>
<!-- right dock -->
<div class="a" style="left:736px;top:96px;width:214px;height:591px;background:#424242"></div>
<div class="a" style="left:736.5px;top:96px;width:213.5px;height:9px;background:#424242"></div>
<div class="a" style="left:735.5px;top:96px;width:1.5px;height:591px;background:#3a3a3a"></div>
<div class="a" style="left:737px;top:105px;width:28px;height:293px;background:#535353"></div>
<div class="a" style="left:737px;top:399px;width:28px;height:288px;background:#4e4e4e"></div>
<svg style="left:755.5px;top:98.6px" width="5" height="4" viewBox="0 0 6 5"><path d="M2.5 .3 L.6 2.5 L2.5 4.7 M5.3 .3 L3.4 2.5 L5.3 4.7" fill="none" stroke="#8c8c8c" stroke-width=".9"/></svg>
<svg style="left:939px;top:98.2px" width="5" height="4" viewBox="0 0 6 5"><path d="M.7 .3 L2.6 2.5 L.7 4.7 M3.5 .3 L5.4 2.5 L3.5 4.7" fill="none" stroke="#9a9a9a" stroke-width=".9"/></svg>
<div class="a" style="left:743.5px;top:107px;width:14px;height:3px;background:repeating-linear-gradient(90deg,#3c3c3c 0 1px,transparent 1px 2.5px)"></div>
<div class="a" style="left:743.5px;top:182px;width:14px;height:3px;background:repeating-linear-gradient(90deg,#3c3c3c 0 1px,transparent 1px 2.5px)"></div>
<div class="a" style="left:737px;top:178px;width:28px;height:1.2px;background:#434343"></div>
<div class="a" style="left:743.5px;top:234.5px;width:14px;height:3px;background:repeating-linear-gradient(90deg,#3c3c3c 0 1px,transparent 1px 2.5px)"></div>
<div class="a" style="left:737px;top:231.5px;width:28px;height:1.2px;background:#434343"></div>
<div class="a" style="left:743.5px;top:287px;width:14px;height:3px;background:repeating-linear-gradient(90deg,#3c3c3c 0 1px,transparent 1px 2.5px)"></div>
<div class="a" style="left:737px;top:283px;width:28px;height:1.2px;background:#434343"></div>
<div class="a" style="left:743.5px;top:339.5px;width:14px;height:3px;background:repeating-linear-gradient(90deg,#3c3c3c 0 1px,transparent 1px 2.5px)"></div>
<div class="a" style="left:737px;top:336px;width:28px;height:1.2px;background:#434343"></div>
<div class="a" style="left:743.5px;top:370.5px;width:14px;height:3px;background:repeating-linear-gradient(90deg,#3c3c3c 0 1px,transparent 1px 2.5px)"></div>
<div class="a" style="left:737px;top:367.5px;width:28px;height:1.2px;background:#434343"></div>
<svg style="left:744.5px;top:116px" width="14" height="14" viewBox="0 0 14 14"><circle cx="7" cy="7" r="4.4" fill="#cdcdcd"/><circle cx="7" cy="7" r="6.2" fill="none" stroke="#cdcdcd" stroke-width="1.1" stroke-dasharray="1.3 1.3"/></svg>
<svg style="left:745px;top:138px" width="14" height="13" viewBox="0 0 14 13"><defs><radialGradient id="qg" cx="0" cy="1" r="1"><stop offset="0" stop-color="#8a8a8a"/><stop offset="1" stop-color="#d4d4d4"/></radialGradient></defs><path d="M.6 12.4 V.6 A12.4 12.4 0 0 1 13 12.4 Z" fill="url(#qg)" stroke="#cdcdcd" stroke-width=".9"/></svg>
<svg style="left:744px;top:158.5px" width="15" height="15" viewBox="0 0 15 15"><circle cx="5.4" cy="7.6" r="4.4" fill="none" stroke="#cdcdcd" stroke-width="1.1"/><circle cx="5.4" cy="7.6" r="1.7" fill="#cdcdcd"/><path d="M6.6 6.4 L12.4 1.8 M6.6 8.8 L12.4 13.2" stroke="#cdcdcd" stroke-width="1.1"/><circle cx="12.6" cy="1.8" r="1.4" fill="#cdcdcd"/><circle cx="12.6" cy="13.2" r="1.4" fill="#cdcdcd"/></svg>
<svg style="left:745px;top:190.5px" width="13" height="13" viewBox="0 0 13 13"><rect x="0" y="0" width="1.3" height="13" fill="#cdcdcd"/><rect x="2.2" y="1.6" width="6.2" height="4" fill="#cdcdcd"/><rect x="2.2" y="7.4" width="10.6" height="4" fill="#cdcdcd"/></svg>
<svg style="left:745.5px;top:212.5px" width="12.5" height="12" viewBox="0 0 12.5 12"><rect x="0" y="0" width="7.4" height="7.4" fill="#cdcdcd"/><rect x="4.6" y="4.4" width="7.6" height="7.4" fill="#cdcdcd"/><rect x="4.6" y="4.4" width="2.8" height="3" fill="#7a7a7a"/></svg>
<svg style="left:745px;top:242px" width="13.5" height="15" viewBox="0 0 13.5 15"><path d="M2.6 7.6 H10.6 L9.8 14.6 H3.4 Z" fill="#cdcdcd"/><path d="M5 7.4 C5 5 3.2 4.6 3.6 2.6 C3.9 1.2 5.4 .2 5.6 .4 C6.2 1.6 6.4 2.6 6 4 C5.8 5 6.4 6 6.2 7.4 Z M7 7.4 L8.6 4 L10.6 2.6 L12.8 3.6 L11.8 5.4 L9.4 5.6 L8.6 7.4 Z M1.2 4.4 L3 4 L4.2 7.4 H2.6 Z" fill="#cdcdcd"/></svg>
<div class="a" style="left:743.5px;top:261.5px;width:16px;height:20px;font-family:'DejaVu Sans',sans-serif;font-size:17px;line-height:20px;text-align:center;color:#cdcdcd">♣</div>
<div class="a" style="left:749.5px;top:293.5px;font-size:13px;line-height:14px;color:#cdcdcd;font-family:'Liberation Sans',sans-serif">A</div>
<svg style="left:745px;top:301.5px" width="8" height="8" viewBox="0 0 8 8"><rect x=".5" y=".5" width="4.6" height="4.6" fill="#535353" stroke="#cdcdcd" stroke-width=".9"/><rect x="2.8" y="2.8" width="4.6" height="4.6" fill="#535353" stroke="#cdcdcd" stroke-width=".9"/></svg>
<div class="a" style="left:750.5px;top:315.5px;font-size:12px;line-height:14px;color:#cdcdcd;font-family:'Liberation Sans',sans-serif;font-weight:bold">¶</div>
<svg style="left:745px;top:323px" width="8" height="8" viewBox="0 0 8 8"><rect x=".5" y=".5" width="4.6" height="4.6" fill="#535353" stroke="#cdcdcd" stroke-width=".9"/><rect x="2.8" y="2.8" width="4.6" height="4.6" fill="#535353" stroke="#cdcdcd" stroke-width=".9"/></svg>
<div class="a" style="left:744.5px;top:345.5px;font-size:16.5px;line-height:18px;color:#cdcdcd;font-family:'Liberation Serif',serif;font-style:italic;font-weight:bold">A</div>
<svg style="left:744.5px;top:379px" width="15" height="14.5" viewBox="0 0 15 14.5"><path d="M6 2.8 H.8 V13.6 H11.6 V8.4" fill="none" stroke="#cdcdcd" stroke-width="1.4"/><path d="M6.4 8 L13.4 1 M8.6 .9 H13.5 V5.8" fill="none" stroke="#cdcdcd" stroke-width="1.4"/></svg>
<div class="a" style="left:767px;top:105px;width:183px;height:20px;background:#474747"></div>
<div class="a" style="left:800.5px;top:105px;width:1px;height:20px;background:#3c3c3c"></div>
<div class="t b" style="left:774px;top:109.3px;color:#c2c2c2;font-size:9.5px;transform:scaleX(0.825)">Layers</div>
<div class="a" style="left:845.0px;top:105px;width:1px;height:20px;background:#3c3c3c"></div>
<div class="t b" style="left:806.5px;top:109.3px;color:#c2c2c2;font-size:9.5px;transform:scaleX(0.87)">Artboards</div>
<div class="a" style="left:845.5px;top:105px;width:33.5px;height:21px;background:#535353"></div>
<div class="t b" style="left:851.5px;top:109.3px;color:#f2f2f2;font-size:9.5px;transform:scaleX(0.84)">Links</div>
<div class="a" style="left:920.5px;top:105px;width:1px;height:20px;background:#3c3c3c"></div>
<div class="t b" style="left:885px;top:109.3px;color:#c2c2c2;font-size:9.5px;transform:scaleX(0.87)">Libraries</div>
<svg style="left:938px;top:112px" width="8" height="6" viewBox="0 0 8 6" fill="#c4c4c4"><rect y="0" width="8" height="1.2"/><rect y="2.4" width="8" height="1.2"/><rect y="4.8" width="8" height="1.2"/></svg>
<div class="a" style="left:767px;top:125px;width:183px;height:77px;background:#535353"></div>
<div class="a" style="left:771px;top:131px;width:175px;height:56px;border:1px solid #646464;border-bottom:none"></div>
<div class="a" style="left:772px;top:155.5px;width:164px;height:1px;background:#5e5e5e"></div>
<div class="a" style="left:772px;top:180.5px;width:164px;height:1px;background:#5e5e5e"></div>
<svg style="left:774.8px;top:133.2px" width="19.4" height="19.4" viewBox="0 0 20 20"><rect width="20" height="20" fill="#dedede"/><ellipse cx="10" cy="11" rx="8" ry="5" fill="#ececec"/><ellipse cx="10" cy="16.2" rx="5.5" ry=".9" fill="#8a8a8a" opacity=".8"/><path d="M4.2 9.6 H15.8 L14 12 L12.6 12.6 L11.4 14.6 L10 15.8 L8.6 14.2 L7 13.4 L5.6 11.8 Z" fill="#6b452a"/><path d="M4.6 9.6 H15.4 L13.6 11 L12 10.6 L10.6 12 L9 10.8 L7.4 11.6 L6 10.6 Z" fill="#9a6f49"/><path d="M8 12.6 L9.4 14.8 L10 15.8 L10.8 14.8 L12 12.8 L10 13.6 Z" fill="#3a281c"/><rect x="4" y="9" width="12" height="1.1" rx=".4" fill="#e6e2b0"/><path d="M5 9 H15 L14.6 8.2 H5.4 Z" fill="#3db4e6"/><circle cx="12.6" cy="5.6" r="1" fill="#e8483d"/><path d="M9.6 8.4 V6.6 M8.6 6.8 Q9.6 5.8 10.8 6.8" stroke="#3bb24a" stroke-width=".7" fill="none"/><rect x="6" y="7.4" width="2.4" height=".9" fill="#fff"/><circle cx="11.6" cy="4.2" r=".5" fill="#4a90d9"/></svg>
<svg style="left:774.8px;top:158.4px" width="19.4" height="19.4" viewBox="0 0 20 20"><rect width="20" height="20" fill="#dedede"/><ellipse cx="10" cy="11" rx="8" ry="5" fill="#ececec"/><ellipse cx="10" cy="16.2" rx="5.5" ry=".9" fill="#8a8a8a" opacity=".8"/><path d="M4.2 9.6 H15.8 L14 12 L12.6 12.6 L11.4 14.6 L10 15.8 L8.6 14.2 L7 13.4 L5.6 11.8 Z" fill="#6b452a"/><path d="M4.6 9.6 H15.4 L13.6 11 L12 10.6 L10.6 12 L9 10.8 L7.4 11.6 L6 10.6 Z" fill="#9a6f49"/><path d="M8 12.6 L9.4 14.8 L10 15.8 L10.8 14.8 L12 12.8 L10 13.6 Z" fill="#3a281c"/><rect x="4" y="9" width="12" height="1.1" rx=".4" fill="#c9807c"/><path d="M7 9 L9.4 6.6 L11.8 9 Z" fill="#5b94a6"/><rect x="10.8" y="6" width="1.6" height="3" fill="#8a4b42"/><circle cx="8.6" cy="4.6" r="1.1" fill="#e8383d"/><path d="M12.6 5.4 q1.2 -1.2 2.4 0 Z" fill="#d6242c"/><path d="M5.4 9 q1 -.2 1.2 -1.6 q.6 1 .2 1.6 Z" fill="#2ba7df"/></svg>
<svg style="left:774.8px;top:183.6px" width="19.4" height="3.4" viewBox="0 0 20 3.5"><rect width="20" height="3.5" fill="#dedede"/><circle cx="8" cy="3" r=".6" fill="#3bb24a"/></svg>
<div class="t" style="left:803px;top:137.5px;font-size:10px;color:#e6e6e6">0140_2 Tourism.jpg</div>
<div class="t" style="left:803px;top:162.5px;font-size:10px;color:#e6e6e6">0140_1 Tourism.jpg</div>
<div class="a" style="left:938.3px;top:140px;width:5.4px;height:21.5px;background:#6c6c6c;border-radius:2.7px"></div>
<svg class="chev" style="left:937.5px;top:133.5px;width:6px;height:4px" viewBox="0 0 7 4"><path d="M.5 3.5 L3.5 .7 L6.5 3.5" fill="none" stroke="#9a9a9a" stroke-width="1"/></svg>
<svg class="chev" style="left:937.5px;top:181px;width:6px;height:4px" viewBox="0 0 7 4"><path d="M.5 .5 L3.5 3.3 L6.5 .5" fill="none" stroke="#9a9a9a" stroke-width="1"/></svg>
<div class="a" style="left:771px;top:187px;width:175px;height:1px;background:#646464"></div>
<svg style="left:778.5px;top:190.5px" width="6" height="9" viewBox="0 0 6 9"><path d="M.3 .3 V8.7 L5.6 4.5 Z" fill="#d8d8d8"/></svg>
<svg style="left:835px;top:190px" width="14" height="10" viewBox="0 0 14 10"><path d="M4.6 4.6 a2.4 2.4 0 0 1 4.2 -1.8 a2 2 0 0 1 3.2 1.4 a1.8 1.8 0 0 1 -.4 3.4 H9" fill="none" stroke="#6c6c6c" stroke-width="1"/><rect x=".6" y="5.4" width="3.8" height="3.4" rx="1.2" fill="none" stroke="#6c6c6c" stroke-width="1"/><rect x="4" y="5.4" width="3.8" height="3.4" rx="1.2" fill="none" stroke="#6c6c6c" stroke-width="1"/></svg>
<svg style="left:856px;top:192px" width="11.5" height="6.5" viewBox="0 0 11.5 6.5"><rect x=".6" y=".8" width="6.2" height="4.8" rx="2.4" fill="none" stroke="#6c6c6c" stroke-width="1.1"/><rect x="4.6" y=".8" width="6.2" height="4.8" rx="2.4" fill="none" stroke="#6c6c6c" stroke-width="1.1"/></svg>
<svg style="left:875.5px;top:190.5px" width="11.5" height="9.5" viewBox="0 0 11.5 9.5"><path d="M4.6 .6 H8.6 L10.8 2.8 V8.8 H4.6 V6.6 M8.4 .6 V3 H10.8" fill="none" stroke="#6c6c6c" stroke-width="1"/><path d="M0 4.8 H5 M3.4 3 L5.4 4.8 L3.4 6.6" fill="none" stroke="#6c6c6c" stroke-width="1.1"/></svg>
<svg style="left:896.5px;top:190.5px" width="9" height="9.5" viewBox="0 0 9 9.5"><path d="M1 4 A3.6 3.6 0 0 1 7.4 2.4 M8 5.6 A3.6 3.6 0 0 1 1.6 7.2" fill="none" stroke="#6c6c6c" stroke-width="1.1"/><path d="M8.4 .4 V3.4 H5.4 Z M.6 9.2 V6.2 H3.6 Z" fill="#6c6c6c"/></svg>
<svg style="left:916px;top:190.5px" width="9" height="9" viewBox="0 0 9 9"><path d="M6.6 .4 L8.6 2.4 L3 8 L.4 8.6 L1 6 Z" fill="#6c6c6c"/></svg>
<div class="a" style="left:767px;top:202px;width:183px;height:2px;background:#3c3c3c"></div>
<div class="a" style="left:767px;top:204px;width:183px;height:20px;background:#474747"></div>
<div class="a" style="left:814.5px;top:204px;width:1px;height:20px;background:#3c3c3c"></div>
<div class="t b" style="left:774px;top:208.3px;color:#c2c2c2;font-size:9.5px;transform:scaleX(0.827)">Swatches</div>
<div class="a" style="left:815px;top:204px;width:41px;height:21px;background:#535353"></div>
<div class="t b" style="left:825.5px;top:208.3px;color:#f2f2f2;font-size:9.5px;transform:scaleX(0.87)">Stroke</div>
<div class="a" style="left:920.5px;top:204px;width:1px;height:20px;background:#3c3c3c"></div>
<div class="t b" style="left:863px;top:208.3px;color:#c2c2c2;font-size:9.5px;transform:scaleX(0.83)">Graphic Styles</div>
<svg style="left:938px;top:211px" width="8" height="6" viewBox="0 0 8 6" fill="#c4c4c4"><rect y="0" width="8" height="1.2"/><rect y="2.4" width="8" height="1.2"/><rect y="4.8" width="8" height="1.2"/></svg>
<svg style="left:818.5px;top:210.5px" width="4" height="7" viewBox="0 0 4 7"><path d="M.4 2.6 L2 .7 L3.6 2.6 M.4 4.4 L2 6.3 L3.6 4.4" fill="none" stroke="#c8c8c8" stroke-width=".8"/></svg>
<div class="a" style="left:767px;top:224px;width:183px;height:143.5px;background:#535353"></div>
<div class="t r" style="right:181.5px;top:231.5px;">Weight:</div>
<div class="a" style="left:821.5px;top:230px;width:72px;height:15.5px;border:1px solid #616161;border-radius:2px"></div>
<svg style="left:825px;top:232px" width="7" height="12" viewBox="0 0 7 12"><path d="M.7 4 L3.5 1.2 L6.3 4 M.7 8 L3.5 10.8 L6.3 8" fill="none" stroke="#d0d0d0" stroke-width="1.1"/></svg>
<div class="a" style="left:835.5px;top:231px;width:44.5px;height:13.5px;background:#454545"></div>
<div class="t" style="left:838.5px;top:231.5px;">1 pt</div>
<svg class="chev" style="left:883px;top:236px" viewBox="0 0 7 4"><path d="M.5 .5 L3.5 3.3 L6.5 .5" fill="none" stroke="#d0d0d0" stroke-width="1.2"/></svg>
<div class="t r" style="right:181.5px;top:251.6px;">Cap:</div>
<div class="t r" style="right:181.5px;top:272px;">Corner:</div>
<div class="t r" style="right:181.5px;top:292.6px;">Align Stroke:</div>
<div class="a" style="left:821.5px;top:250px;width:51.5px;height:15.5px;border:1px solid #616161;border-radius:2px"></div>
<div class="a" style="left:822px;top:250.5px;width:16.5px;height:14.5px;background:#2f2f2f;border-radius:1px"></div>
<div class="a" style="left:838.5px;top:251px;width:1px;height:13.5px;background:#616161"></div>
<div class="a" style="left:855.5px;top:251px;width:1px;height:13.5px;background:#616161"></div>
<div class="a" style="left:821.5px;top:270.5px;width:51.5px;height:15.5px;border:1px solid #616161;border-radius:2px"></div>
<div class="a" style="left:822px;top:271.0px;width:16.5px;height:14.5px;background:#2f2f2f;border-radius:1px"></div>
<div class="a" style="left:838.5px;top:271.5px;width:1px;height:13.5px;background:#616161"></div>
<div class="a" style="left:855.5px;top:271.5px;width:1px;height:13.5px;background:#616161"></div>
<div class="a" style="left:821.5px;top:291px;width:51.5px;height:15.5px;border:1px solid #616161;border-radius:2px"></div>
<div class="a" style="left:822px;top:291.5px;width:16.5px;height:14.5px;background:#2f2f2f;border-radius:1px"></div>
<div class="a" style="left:838.5px;top:292px;width:1px;height:13.5px;background:#616161"></div>
<div class="a" style="left:855.5px;top:292px;width:1px;height:13.5px;background:#616161"></div>
<svg style="left:826px;top:253px" width="9.5" height="10.5" viewBox="0 0 9.5 10.5"><path d="M3 0 H9 V10.4 H3 V8 H.4 V2.4 H3 Z" fill="#d2d2d2"/><path d="M2 5.2 H6.2" stroke="#2a2a2a" stroke-width="1"/><circle cx="2.4" cy="5.2" r="1.1" fill="#2a2a2a"/></svg>
<svg style="left:843px;top:253px" width="9.5" height="10.5" viewBox="0 0 9.5 10.5"><path d="M5.2 0 H9 V10.4 H5.2 A5.2 5.2 0 0 1 5.2 0 Z" fill="#d2d2d2"/><path d="M4.6 5.2 H8" stroke="#2a2a2a" stroke-width="1"/><circle cx="4.6" cy="5.2" r="1.1" fill="#2a2a2a"/></svg>
<svg style="left:860px;top:253px" width="9.5" height="10.5" viewBox="0 0 9.5 10.5"><path d="M.4 0 H9 V10.4 H.4 Z" fill="#d2d2d2"/><path d="M4.6 5.2 H8" stroke="#2a2a2a" stroke-width="1"/><circle cx="4.6" cy="5.2" r="1.1" fill="#2a2a2a"/></svg>
<svg style="left:826px;top:273.5px" width="9.5" height="10.5" viewBox="0 0 9.5 10.5"><path d="M.4 .4 H9.4 V5.6 H5.6 V10 H.4 Z" fill="#d2d2d2"/><path d="M3 10 V3 H9.4" fill="none" stroke="#2a2a2a" stroke-width=".9"/><circle cx="3" cy="3" r="1" fill="#2a2a2a"/></svg>
<svg style="left:843px;top:273.5px" width="9.5" height="10.5" viewBox="0 0 9.5 10.5"><path d="M5 .4 H9.4 V5.6 H5.6 V10 H.4 V5 A4.6 4.6 0 0 1 5 .4 Z" fill="#d2d2d2"/><path d="M3 10 V3 H9.4" fill="none" stroke="#2a2a2a" stroke-width=".9"/><circle cx="3" cy="3" r="1" fill="#2a2a2a"/></svg>
<svg style="left:860px;top:273.5px" width="9.5" height="10.5" viewBox="0 0 9.5 10.5"><path d="M4 .4 H9.4 V5.6 H5.6 V10 H.4 V4 Z" fill="#d2d2d2"/><path d="M3 10 V3 H9.4" fill="none" stroke="#2a2a2a" stroke-width=".9"/><circle cx="3" cy="3" r="1" fill="#2a2a2a"/></svg>
<svg style="left:826px;top:293.5px" width="9.5" height="10.5" viewBox="0 0 9.5 10.5"><path d="M.4 .4 H4.6 V6 H9.4 V10 H.4 Z" fill="#d2d2d2"/><path d="M2.4 .4 V8 H9.4" fill="none" stroke="#fff" stroke-width=".9"/></svg>
<svg style="left:843px;top:293.5px" width="9.5" height="10.5" viewBox="0 0 9.5 10.5"><path d="M1.6 .4 H5.4 V5.4 H9.4 V9 H1.6 Z" fill="#d2d2d2"/><path d="M1 .4 V9.8 H9.4" fill="none" stroke="#9a9a9a" stroke-width=".8"/></svg>
<svg style="left:860px;top:293.5px" width="9.5" height="10.5" viewBox="0 0 9.5 10.5"><path d="M.4 .4 H4.8 V5 H9.4 V10 H.4 Z" fill="#d2d2d2"/><path d="M5.2 .4 V4.6 H9.4" fill="none" stroke="#9a9a9a" stroke-width=".8"/></svg>
<div class="t" style="left:882px;top:272px;">Limit:</div>
<div class="a" style="left:905.5px;top:270.5px;width:33px;height:15.5px;background:#454545;border:1px solid #616161;border-radius:2px"></div>
<div class="t" style="left:909px;top:272px;">10</div>
<div class="t" style="left:941px;top:272px;">x</div>
<div class="a" style="left:771px;top:312px;width:175px;height:1px;background:#484848"></div>
<div class="a" style="left:772px;top:320.5px;width:9px;height:9px;border:1px solid #c0c0c0;border-radius:1.5px"></div>
<div class="t b" style="left:785px;top:318.7px;color:#e8e8e8;transform:scaleX(.79)">Dashed Line</div>
<div class="a" style="left:888.5px;top:317px;width:57.5px;height:15.5px;border:1px solid #5e5e5e;border-radius:2px"></div>
<div class="a" style="left:916.5px;top:318px;width:1px;height:13.5px;background:#5e5e5e"></div>
<svg style="left:892px;top:320.5px" width="21" height="9" viewBox="0 0 21 9"><path d="M.5 3 V.5 H4 M8 .5 H13 M17 .5 H20.5 V3 M20.5 6 V8.5 H17 M13 8.5 H8 M4 8.5 H.5 V6" fill="none" stroke="#6f6f6f" stroke-width="1"/></svg>
<svg style="left:921px;top:320.5px" width="21" height="9" viewBox="0 0 21 9"><path d="M.5 3 V.5 H4 M8 .5 H13 M17 .5 H20.5 V3 M20.5 6 V8.5 H17 M13 8.5 H8 M4 8.5 H.5 V6" fill="none" stroke="#6f6f6f" stroke-width="1"/></svg>
<div class="a" style="left:771px;top:337px;width:26.5px;height:15.5px;background:#5a5a5a;border-radius:2px"></div>
<div class="t c" style="left:771px;top:353.4px;width:26.5px;text-align:center;color:#8c8c8c">dash</div>
<div class="a" style="left:800.3px;top:337px;width:26.5px;height:15.5px;background:#5a5a5a;border-radius:2px"></div>
<div class="t c" style="left:800.3px;top:353.4px;width:26.5px;text-align:center;color:#8c8c8c">gap</div>
<div class="a" style="left:830px;top:337px;width:26.5px;height:15.5px;background:#5a5a5a;border-radius:2px"></div>
<div class="t c" style="left:830px;top:353.4px;width:26.5px;text-align:center;color:#8c8c8c">dash</div>
<div class="a" style="left:859.6px;top:337px;width:26.5px;height:15.5px;background:#5a5a5a;border-radius:2px"></div>
<div class="t c" style="left:859.6px;top:353.4px;width:26.5px;text-align:center;color:#8c8c8c">gap</div>
<div class="a" style="left:889px;top:337px;width:26.5px;height:15.5px;background:#5a5a5a;border-radius:2px"></div>
<div class="t c" style="left:889px;top:353.4px;width:26.5px;text-align:center;color:#8c8c8c">dash</div>
<div class="a" style="left:918.8px;top:337px;width:26.5px;height:15.5px;background:#5a5a5a;border-radius:2px"></div>
<div class="t c" style="left:918.8px;top:353.4px;width:26.5px;text-align:center;color:#8c8c8c">gap</div>
<div class="a" style="left:767px;top:367.5px;width:183px;height:2px;background:#3c3c3c"></div>
<div class="a" style="left:767px;top:369.5px;width:183px;height:21px;background:#474747"></div>
<div class="a" style="left:767px;top:369.5px;width:38px;height:22px;background:#535353"></div>
<div class="t b" style="left:778px;top:373.8px;color:#f2f2f2;font-size:9.5px;transform:scaleX(0.87)">Color</div>
<div class="a" style="left:871.0px;top:369.5px;width:1px;height:21px;background:#3c3c3c"></div>
<div class="t b" style="left:812px;top:373.8px;color:#c2c2c2;font-size:9.5px;transform:scaleX(0.86)">Transparency</div>
<div class="a" style="left:917.0px;top:369.5px;width:1px;height:21px;background:#3c3c3c"></div>
<div class="t b" style="left:878px;top:373.8px;color:#c2c2c2;font-size:9.5px;transform:scaleX(0.87)">Gradient</div>
<svg style="left:938px;top:376.5px" width="8" height="6" viewBox="0 0 8 6" fill="#c4c4c4"><rect y="0" width="8" height="1.2"/><rect y="2.4" width="8" height="1.2"/><rect y="4.8" width="8" height="1.2"/></svg>
<svg style="left:770.5px;top:376px" width="4" height="7" viewBox="0 0 4 7"><path d="M.4 2.6 L2 .7 L3.6 2.6 M.4 4.4 L2 6.3 L3.6 4.4" fill="none" stroke="#c8c8c8" stroke-width=".8"/></svg>
<div class="a" style="left:767px;top:390.5px;width:183px;height:77px;background:#535353"></div>
<svg style="left:772px;top:398.5px" width="30" height="10" viewBox="0 0 30 10"><rect width="10" height="10" fill="#fff"/><path d="M0 10 L10 0" stroke="#e21d24" stroke-width="1.6"/><rect x="10" width="10" height="10" fill="#000"/><rect x="20" width="10" height="10" fill="#fff"/></svg>
<div class="a" style="left:772.3px;top:417px;width:164.7px;height:45.2px;background:linear-gradient(to bottom,#fff 0%,rgba(255,255,255,.7) 14%,rgba(255,255,255,.25) 32%,rgba(255,255,255,0) 48%,rgba(0,0,0,0) 56%,rgba(0,0,0,.22) 74%,rgba(0,0,0,.6) 90%,rgba(0,0,0,.92) 100%),linear-gradient(to right,#ea2227 0%,#ee3a2c 4%,#f6a11e 10%,#f4e61f 16%,#b4d234 25%,#4fae46 36%,#1f9a5a 43%,#27a99a 49%,#34b1e6 54%,#2a62b4 62%,#3b46a0 69%,#7a3f98 79%,#e4288e 90%,#ea2227 98%)"></div>
<div class="a" style="left:767px;top:467.5px;width:183px;height:2px;background:#3c3c3c"></div>
<div class="a" style="left:767px;top:469.5px;width:183px;height:20px;background:#474747"></div>
<div class="a" style="left:767px;top:469.5px;width:58px;height:21px;background:#535353"></div>
<div class="t b" style="left:778px;top:473.8px;color:#f2f2f2;font-size:9.5px;transform:scaleX(0.87)">Transform</div>
<svg style="left:938px;top:476.5px" width="8" height="6" viewBox="0 0 8 6" fill="#c4c4c4"><rect y="0" width="8" height="1.2"/><rect y="2.4" width="8" height="1.2"/><rect y="4.8" width="8" height="1.2"/></svg>
<svg style="left:770.5px;top:475.5px" width="4" height="7" viewBox="0 0 4 7"><path d="M.4 2.6 L2 .7 L3.6 2.6 M.4 4.4 L2 6.3 L3.6 4.4" fill="none" stroke="#c8c8c8" stroke-width=".8"/></svg>
<div class="a" style="left:767px;top:489.5px;width:183px;height:64.5px;background:#535353"></div>
<svg style="left:771px;top:505px" width="15" height="15" viewBox="0 0 15 15" fill="none" stroke="#c4c4c4" stroke-width=".8"><rect x="0.5" y="0.5" width="3.6" height="3.6" /><rect x="0.5" y="5.7" width="3.6" height="3.6" /><rect x="0.5" y="10.9" width="3.6" height="3.6" /><rect x="5.7" y="0.5" width="3.6" height="3.6" /><rect x="5.7" y="5.7" width="3.6" height="3.6" fill="#e0e0e0"/><rect x="5.7" y="10.9" width="3.6" height="3.6" /><rect x="10.9" y="0.5" width="3.6" height="3.6" /><rect x="10.9" y="5.7" width="3.6" height="3.6" /><rect x="10.9" y="10.9" width="3.6" height="3.6" /></svg>
<div class="t b r" style="right:196.5px;top:497px;color:#7d7d7d">X:</div>
<div class="a" style="left:806.5px;top:495.5px;width:50.5px;height:14.5px;background:#5b5b5b;border-radius:2px"></div>
<div class="t" style="left:810px;top:497px;color:#6e6e6e">0 in</div>
<div class="t b r" style="right:196.5px;top:517px;color:#7d7d7d">Y:</div>
<div class="a" style="left:806.5px;top:515.5px;width:50.5px;height:14.5px;background:#5b5b5b;border-radius:2px"></div>
<div class="t" style="left:810px;top:517px;color:#6e6e6e">0 in</div>
<div class="t b r" style="right:129.5px;top:497px;color:#7d7d7d">W:</div>
<div class="a" style="left:873px;top:495.5px;width:50px;height:14.5px;background:#5b5b5b;border-radius:2px"></div>
<div class="t" style="left:876.5px;top:497px;color:#6e6e6e">0 in</div>
<div class="t b r" style="right:129.5px;top:517px;color:#7d7d7d">H:</div>
<div class="a" style="left:873px;top:515.5px;width:50px;height:14.5px;background:#5b5b5b;border-radius:2px"></div>
<div class="t" style="left:876.5px;top:517px;color:#6e6e6e">0 in</div>
<div class="a" style="left:927px;top:503.5px;width:18px;height:17.5px;background:#303030;border-radius:2px"></div>
<svg style="left:932.5px;top:506px" width="7" height="13" viewBox="0 0 7 13"><rect x="1" y=".8" width="5" height="6.4" rx="2.5" fill="none" stroke="#e0e0e0" stroke-width="1.3"/><rect x="1" y="5.8" width="5" height="6.4" rx="2.5" fill="none" stroke="#e0e0e0" stroke-width="1.3"/></svg>
<svg style="left:792px;top:538px" width="10" height="9" viewBox="0 0 10 9"><path d="M9.5 8 H.8 L6.6 .8" fill="none" stroke="#7d7d7d" stroke-width="1"/></svg>
<div class="t b" style="left:802px;top:537px;color:#7d7d7d">:</div>
<div class="a" style="left:806.5px;top:535px;width:46px;height:14.5px;background:#5b5b5b;border-radius:2px"></div>
<div class="t" style="left:810px;top:537px;color:#6e6e6e">0°</div>
<svg class="chev" style="left:842px;top:540.5px" viewBox="0 0 7 4"><path d="M.5 .5 L3.5 3.3 L6.5 .5" fill="none" stroke="#747474" stroke-width="1.2"/></svg>
<svg style="left:858px;top:538px" width="11" height="8" viewBox="0 0 11 8"><path d="M3.4 .3 H10.6 L7.4 7.7 H.2 Z" fill="#7d7d7d"/></svg>
<div class="t b" style="left:869px;top:537px;color:#7d7d7d">:</div>
<div class="a" style="left:873px;top:535px;width:45.5px;height:14.5px;background:#5b5b5b;border-radius:2px"></div>
<div class="t" style="left:876.5px;top:537px;color:#6e6e6e">0°</div>
<svg class="chev" style="left:907.5px;top:540.5px" viewBox="0 0 7 4"><path d="M.5 .5 L3.5 3.3 L6.5 .5" fill="none" stroke="#747474" stroke-width="1.2"/></svg>
<div class="a" style="left:767px;top:554px;width:183px;height:2px;background:#3c3c3c"></div>
<div class="a" style="left:767px;top:556px;width:183px;height:21px;background:#474747"></div>
<div class="a" style="left:767px;top:556px;width:55.5px;height:22px;background:#535353"></div>
<div class="t b" style="left:778.5px;top:560.3px;color:#f2f2f2;font-size:9.5px;transform:scaleX(0.86)">Character</div>
<div class="a" style="left:872.0px;top:556px;width:1px;height:21px;background:#3c3c3c"></div>
<div class="t b" style="left:829px;top:560.3px;color:#c2c2c2;font-size:9.5px;transform:scaleX(0.87)">Paragraph</div>
<div class="a" style="left:920.0px;top:556px;width:1px;height:21px;background:#3c3c3c"></div>
<div class="t b" style="left:879px;top:560.3px;color:#c2c2c2;font-size:9.5px;transform:scaleX(0.87)">OpenType</div>
<svg style="left:938px;top:563px" width="8" height="6" viewBox="0 0 8 6" fill="#c4c4c4"><rect y="0" width="8" height="1.2"/><rect y="2.4" width="8" height="1.2"/><rect y="4.8" width="8" height="1.2"/></svg>
<svg style="left:770.5px;top:562.5px" width="4" height="7" viewBox="0 0 4 7"><path d="M.4 2.6 L2 .7 L3.6 2.6 M.4 4.4 L2 6.3 L3.6 4.4" fill="none" stroke="#c8c8c8" stroke-width=".8"/></svg>
<div class="a" style="left:767px;top:577px;width:183px;height:110px;background:#535353"></div>
<div class="a" style="left:771px;top:582px;width:94px;height:16px;border:1px solid #6a6a6a;border-radius:2px"></div>
<svg style="left:777px;top:584px" width="12" height="12" viewBox="0 0 12 12"><rect x="1.2" y="1.2" width="9.6" height="9.6" fill="none" stroke="#cfcfcf" stroke-width=".8"/><g fill="#e0e0e0"><rect x="0" y="0" width="2.4" height="2.4"/><rect x="9.6" y="0" width="2.4" height="2.4"/><rect x="0" y="9.6" width="2.4" height="2.4"/><rect x="9.6" y="9.6" width="2.4" height="2.4"/><path d="M3.2 3 H8.8 V4.6 H8.1 V3.9 H6.6 V8.4 H7.4 V9.1 H4.6 V8.4 H5.4 V3.9 H3.9 V4.6 H3.2 Z"/></g></svg>
<div class="t b" style="left:795.4px;top:584px;color:#f0f0f0;transform:scaleX(.836)">Touch Type Tool</div>
<div class="a" style="left:771px;top:603px;width:175px;height:15px;border:1px solid #616161;border-radius:2px"></div>
<div class="a" style="left:772px;top:604px;width:159.5px;height:13px;background:#444"></div>
<svg class="chev" style="left:935px;top:609px" viewBox="0 0 7 4"><path d="M.5 .5 L3.5 3.3 L6.5 .5" fill="none" stroke="#d0d0d0" stroke-width="1.2"/></svg>
<div class="a" style="left:771px;top:623px;width:175px;height:15px;border:1px solid #616161;border-radius:2px"></div>
<div class="a" style="left:772px;top:624px;width:159.5px;height:13px;background:#444"></div>
<svg class="chev" style="left:935px;top:629px" viewBox="0 0 7 4"><path d="M.5 .5 L3.5 3.3 L6.5 .5" fill="none" stroke="#d0d0d0" stroke-width="1.2"/></svg>
<svg style="left:774px;top:605.5px" width="14" height="10" viewBox="0 0 14 10"><circle cx="5.4" cy="3.8" r="3" fill="none" stroke="#c4c4c4" stroke-width="1.1"/><path d="M3.3 6 L.6 9" stroke="#c4c4c4" stroke-width="1.3"/><path d="M9.6 7 L11 8.6 L12.4 7" fill="none" stroke="#c4c4c4" stroke-width=".9"/></svg>
<div class="t" style="left:790.5px;top:604.5px;">Myriad Pro</div>
<div class="t" style="left:776px;top:624.5px;">Regular</div>
<div class="a" style="left:771px;top:642.5px;width:175px;height:1px;background:#484848"></div>
<div class="a" style="left:786.5px;top:648.5px;width:67px;height:14.5px;border:1px solid #616161;border-radius:2px"></div>
<svg style="left:790px;top:650.0px" width="7" height="12" viewBox="0 0 7 12"><path d="M.7 4 L3.5 1.2 L6.3 4 M.7 8 L3.5 10.8 L6.3 8" fill="none" stroke="#d0d0d0" stroke-width="1.1"/></svg>
<div class="a" style="left:801px;top:649.5px;width:38.5px;height:12.5px;background:#444"></div>
<svg class="chev" style="left:842.5px;top:654.0px" viewBox="0 0 7 4"><path d="M.5 .5 L3.5 3.3 L6.5 .5" fill="none" stroke="#d0d0d0" stroke-width="1.2"/></svg>
<div class="a" style="left:880px;top:648.5px;width:66px;height:14.5px;border:1px solid #616161;border-radius:2px"></div>
<svg style="left:883.5px;top:650.0px" width="7" height="12" viewBox="0 0 7 12"><path d="M.7 4 L3.5 1.2 L6.3 4 M.7 8 L3.5 10.8 L6.3 8" fill="none" stroke="#d0d0d0" stroke-width="1.1"/></svg>
<div class="a" style="left:893.5px;top:649.5px;width:38.5px;height:12.5px;background:#444"></div>
<svg class="chev" style="left:935px;top:654.0px" viewBox="0 0 7 4"><path d="M.5 .5 L3.5 3.3 L6.5 .5" fill="none" stroke="#d0d0d0" stroke-width="1.2"/></svg>
<div class="a" style="left:786.5px;top:668.5px;width:67px;height:14.5px;border:1px solid #616161;border-radius:2px"></div>
<svg style="left:790px;top:670.0px" width="7" height="12" viewBox="0 0 7 12"><path d="M.7 4 L3.5 1.2 L6.3 4 M.7 8 L3.5 10.8 L6.3 8" fill="none" stroke="#d0d0d0" stroke-width="1.1"/></svg>
<div class="a" style="left:801px;top:669.5px;width:38.5px;height:12.5px;background:#444"></div>
<svg class="chev" style="left:842.5px;top:674.0px" viewBox="0 0 7 4"><path d="M.5 .5 L3.5 3.3 L6.5 .5" fill="none" stroke="#d0d0d0" stroke-width="1.2"/></svg>
<div class="a" style="left:880px;top:668.5px;width:66px;height:14.5px;border:1px solid #616161;border-radius:2px"></div>
<svg style="left:883.5px;top:670.0px" width="7" height="12" viewBox="0 0 7 12"><path d="M.7 4 L3.5 1.2 L6.3 4 M.7 8 L3.5 10.8 L6.3 8" fill="none" stroke="#d0d0d0" stroke-width="1.1"/></svg>
<div class="a" style="left:893.5px;top:669.5px;width:38.5px;height:12.5px;background:#444"></div>
<svg class="chev" style="left:935px;top:674.0px" viewBox="0 0 7 4"><path d="M.5 .5 L3.5 3.3 L6.5 .5" fill="none" stroke="#d0d0d0" stroke-width="1.2"/></svg>
<div class="t" style="left:804px;top:648.8px;">12 pt</div>
<div class="t" style="left:895px;top:648.8px;">(14.4 pt)</div>
<div class="t" style="left:804px;top:668.8px;">Auto</div>
<div class="t" style="left:896px;top:668.8px;">0</div>
<div class="a" style="left:771px;top:652.5px;font-size:8.5px;line-height:9px;font-family:'Liberation Serif',serif;font-weight:bold;color:#cdcdcd">T</div>
<div class="a" style="left:776px;top:647.5px;font-size:14px;line-height:14px;font-family:'Liberation Serif',serif;font-weight:bold;color:#cdcdcd">T</div>
<div class="a" style="left:868.5px;top:646.5px;font-size:8px;line-height:8px;font-family:'Liberation Serif',serif;font-weight:bold;color:#cdcdcd">A</div>
<div class="a" style="left:868.5px;top:654.5px;font-size:8px;line-height:8px;font-family:'Liberation Serif',serif;font-weight:bold;color:#cdcdcd">A</div>
<svg style="left:864px;top:648px" width="13" height="14" viewBox="0 0 13 14"><path d="M4.6 6.9 H12.6 M4.6 14 H12.6" stroke="#cdcdcd" stroke-width=".8"/><path d="M1.8 7.6 V13.4 M.4 9 L1.8 7.4 L3.2 9 M.4 12 L1.8 13.6 L3.2 12" fill="none" stroke="#cdcdcd" stroke-width=".8"/></svg>
<div class="a" style="left:770.5px;top:668px;font-size:11px;line-height:11px;letter-spacing:-2.2px;font-family:'Liberation Serif',serif;font-weight:bold;color:#cdcdcd;font-weight:normal">VA</div>
<svg style="left:771px;top:669px" width="14" height="13" viewBox="0 0 14 13"><path d="M8.2 .4 L5.6 9.6" stroke="#cdcdcd" stroke-width=".8"/><path d="M8 11.4 H13.4 M10 9.8 L8 11.4 L10 13" fill="none" stroke="#cdcdcd" stroke-width=".9"/></svg>
<div class="a" style="left:863.5px;top:669px;width:13.5px;height:8.6px;background:#cdcdcd"></div>
<div class="a" style="left:864px;top:668.5px;font-size:9.5px;line-height:10px;letter-spacing:-1.2px;font-family:'Liberation Serif',serif;font-weight:bold;color:#444">VA</div>
<svg style="left:863.5px;top:678.5px" width="13.5" height="4" viewBox="0 0 13.5 4"><path d="M.6 2 H12.9 M2.4 .4 L.6 2 L2.4 3.6 M11.1 .4 L12.9 2 L11.1 3.6" fill="none" stroke="#cdcdcd" stroke-width=".8"/></svg>
<!-- callout lines overlaying the window -->
<div class="red" style="left:309.5px;top:29px;width:1px;height:47px"></div>
<div class="red" style="left:206px;top:76px;width:220px;height:1px"></div>
<div class="red" style="left:206px;top:76px;width:1px;height:22px"></div>
<div class="red" style="left:425px;top:76px;width:1px;height:23px"></div>
<div class="red" style="left:512px;top:29px;width:1px;height:21px"></div>
<div class="red" style="left:766px;top:29px;width:1px;height:19px"></div>
<div class="red" style="left:827px;top:29px;width:1px;height:74px"></div>
<div class="a" style="left:933.9px;top:92.2px;width:15.4px;height:15.4px;border:1.7px solid #e5262a;border-radius:50%"></div>
</body></html>
